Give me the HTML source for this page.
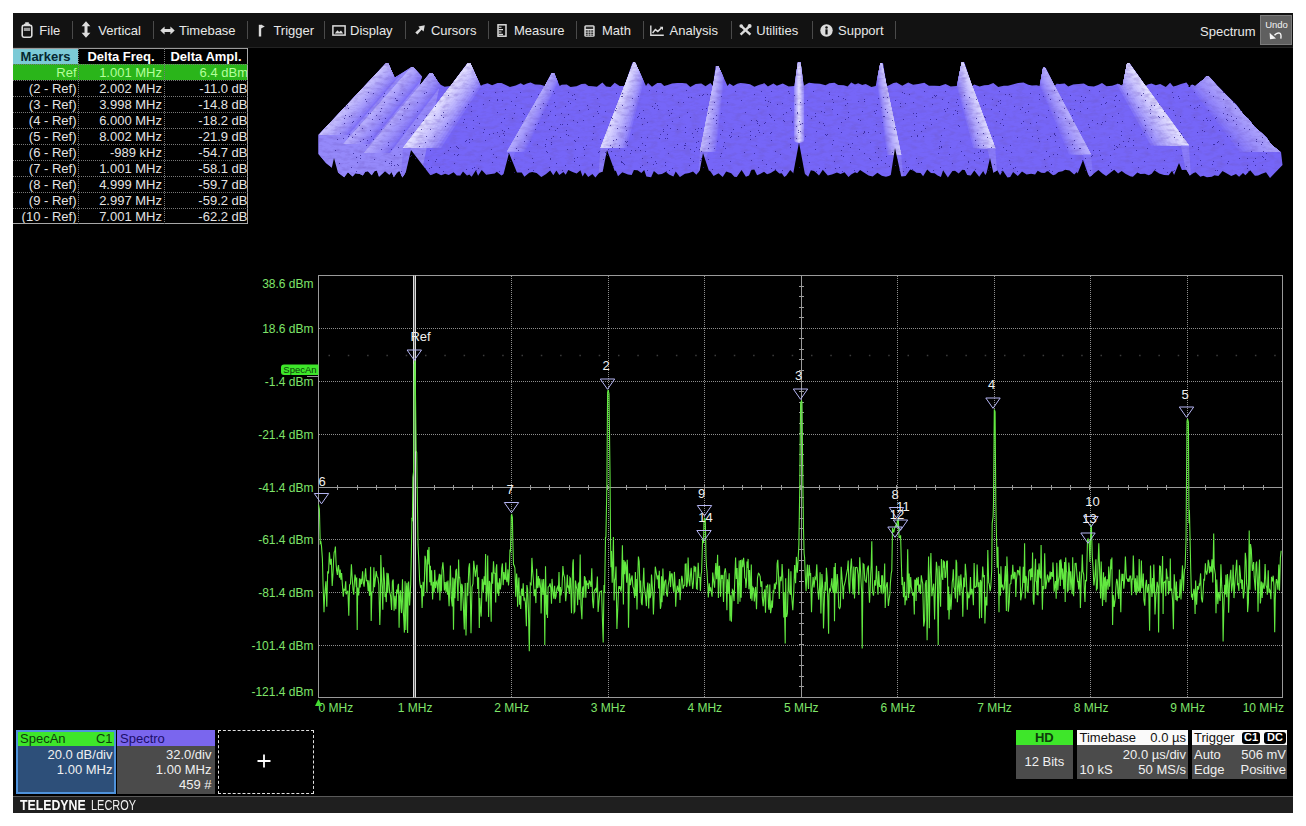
<!DOCTYPE html>
<html><head><meta charset="utf-8"><style>
html,body{margin:0;padding:0;background:#fff;width:1306px;height:826px;overflow:hidden;font-family:"Liberation Sans", sans-serif}
#frame{position:absolute;left:13px;top:13px;width:1280px;height:800px;background:#000;overflow:hidden}
#menu{position:absolute;left:0;top:0;width:1280px;height:35px;background:#121212;box-shadow:inset 0 -1px 0 #232323}
.mt{position:absolute;top:9.5px;font-size:13px;line-height:16px;color:#e8e8e8;white-space:nowrap}
.th{position:absolute;font-size:13px;font-weight:bold;line-height:17px;height:16px;text-align:center;white-space:nowrap}
.bt{position:absolute;font-size:13px;line-height:14px;white-space:nowrap}
.td{position:absolute;font-size:13px;line-height:17px;height:16px;text-align:right;color:#e4e4e4;white-space:nowrap;padding-right:1.5px}
</style></head><body>
<div id="frame">
<div id="menu">
<div style="position:absolute;left:8px;top:8.5px;line-height:0"><svg width="12" height="16" viewBox="0 0 12 16"><path d="M4.2 1h3.6M3 2.4h6" stroke="#dcdcdc" stroke-width="1.3"/><rect x="1.2" y="3.4" width="9.6" height="11.8" rx="1.6" fill="none" stroke="#dcdcdc" stroke-width="1.6"/><rect x="2.8" y="5.8" width="6.4" height="3.2" fill="#9a9a9a"/></svg></div>
<div class="mt" style="left:26.299999999999997px">File</div>
<div style="position:absolute;left:67.5px;top:8px;line-height:0"><svg width="10" height="17" viewBox="0 0 10 17"><path d="M5 0.3L9.4 5.3H6.5V11.7H9.4L5 16.7L0.6 11.7H3.5V5.3H0.6Z" fill="#dcdcdc"/></svg></div>
<div class="mt" style="left:85.3px">Vertical</div>
<div style="position:absolute;left:146.5px;top:12.5px;line-height:0"><svg width="15" height="9" viewBox="0 0 15 9"><path d="M0.3 4.5L4.6 0.5V3.1H10.4V0.5L14.7 4.5L10.4 8.5V5.9H4.6V8.5Z" fill="#dcdcdc"/></svg></div>
<div class="mt" style="left:166px">Timebase</div>
<div style="position:absolute;left:245px;top:10.5px;line-height:0"><svg width="7" height="13" viewBox="0 0 7 13"><path d="M2 0.8V12.5" stroke="#dcdcdc" stroke-width="2.4"/><path d="M3 0.6L6.8 2.4L3 4.6Z" fill="#dcdcdc"/></svg></div>
<div class="mt" style="left:260.4px">Trigger</div>
<div style="position:absolute;left:318.5px;top:12px;line-height:0"><svg width="14" height="11" viewBox="0 0 14 11"><rect x="0.9" y="0.9" width="12.2" height="9.2" fill="none" stroke="#dcdcdc" stroke-width="1.5"/><path d="M2.8 8.4L5.4 5.2L7.2 7L9 5.6L11.2 8.4Z" fill="#dcdcdc"/></svg></div>
<div class="mt" style="left:337px">Display</div>
<div style="position:absolute;left:401.5px;top:12px;line-height:0"><svg width="10" height="10" viewBox="0 0 10 10"><path d="M9.8 0.2L8.6 6.4L6.6 4.8L2.4 9.6L0.3 7.6L4.9 3.3L3.4 1.4Z" fill="#dcdcdc"/></svg></div>
<div class="mt" style="left:417.9px">Cursors</div>
<div style="position:absolute;left:484px;top:10.5px;line-height:0"><svg width="10" height="13" viewBox="0 0 10 13"><rect x="1" y="0.8" width="8" height="11.4" fill="none" stroke="#dcdcdc" stroke-width="1.5"/><path d="M1.5 3.2H4.5M1.5 5.6H6M1.5 8H4.5M1.5 10.4H6" stroke="#dcdcdc" stroke-width="1.1"/></svg></div>
<div class="mt" style="left:501px">Measure</div>
<div style="position:absolute;left:571px;top:11.5px;line-height:0"><svg width="11" height="12" viewBox="0 0 11 12"><rect x="0.3" y="0.3" width="10.4" height="11.4" rx="1.5" fill="#dcdcdc"/><rect x="1.8" y="1.6" width="7.4" height="2.4" fill="#333"/><path d="M1.8 5.2h2v1.5h-2zM4.5 5.2h2v1.5h-2zM7.2 5.2h2v1.5h-2zM1.8 7.5h2v1.5h-2zM4.5 7.5h2v1.5h-2zM7.2 7.5h2v1.5h-2zM1.8 9.6h2v1.2h-2zM4.5 9.6h2v1.2h-2zM7.2 9.6h2v1.2h-2z" fill="#333"/></svg></div>
<div class="mt" style="left:589px">Math</div>
<div style="position:absolute;left:637px;top:12px;line-height:0"><svg width="14" height="11" viewBox="0 0 14 11"><path d="M0.8 0.5V10.2H13.8" fill="none" stroke="#dcdcdc" stroke-width="1.4"/><path d="M2.6 8L5.4 4.6L7.8 6.4L11.4 3" fill="none" stroke="#dcdcdc" stroke-width="1.5"/><path d="M9.6 1.8H13V5.2Z" fill="#dcdcdc"/></svg></div>
<div class="mt" style="left:656.5px">Analysis</div>
<div style="position:absolute;left:726px;top:11px;line-height:0"><svg width="13" height="12" viewBox="0 0 13 12"><path d="M1.8 1.6L11.4 10.6" stroke="#dcdcdc" stroke-width="2.4"/><path d="M11.2 1.6L1.6 10.6" stroke="#dcdcdc" stroke-width="2.4"/><circle cx="10.6" cy="2" r="2" fill="#dcdcdc"/><circle cx="2.2" cy="2" r="1.8" fill="#dcdcdc"/></svg></div>
<div class="mt" style="left:743.3px">Utilities</div>
<div style="position:absolute;left:806.5px;top:11px;line-height:0"><svg width="13" height="13" viewBox="0 0 13 13"><circle cx="6.5" cy="6.5" r="6.2" fill="#dcdcdc"/><rect x="5.4" y="5.3" width="2.2" height="5.2" fill="#111"/><circle cx="6.5" cy="3.4" r="1.25" fill="#111"/></svg></div>
<div class="mt" style="left:825px">Support</div>
<div style="position:absolute;left:59.0px;top:8px;width:1px;height:18px;background:#4a4a4a"></div>
<div style="position:absolute;left:140.1px;top:8px;width:1px;height:18px;background:#4a4a4a"></div>
<div style="position:absolute;left:233.5px;top:8px;width:1px;height:18px;background:#4a4a4a"></div>
<div style="position:absolute;left:310.8px;top:8px;width:1px;height:18px;background:#4a4a4a"></div>
<div style="position:absolute;left:391.9px;top:8px;width:1px;height:18px;background:#4a4a4a"></div>
<div style="position:absolute;left:474.8px;top:8px;width:1px;height:18px;background:#4a4a4a"></div>
<div style="position:absolute;left:562.8px;top:8px;width:1px;height:18px;background:#4a4a4a"></div>
<div style="position:absolute;left:629.7px;top:8px;width:1px;height:18px;background:#4a4a4a"></div>
<div style="position:absolute;left:718.2px;top:8px;width:1px;height:18px;background:#4a4a4a"></div>
<div style="position:absolute;left:798.8px;top:8px;width:1px;height:18px;background:#4a4a4a"></div>
<div style="position:absolute;left:881.9px;top:8px;width:1px;height:18px;background:#4a4a4a"></div>
<div class="mt" style="left:1187px;top:11px">Spectrum</div>
<div style="position:absolute;left:1247px;top:2px;width:32px;height:30px;background:#5f5f5f;border:1px solid #7c7c7c;box-sizing:border-box"></div>
<div style="position:absolute;left:1252px;top:7px;width:23px;text-align:center;font-size:9.5px;line-height:10px;color:#f4f4f4">Undo</div>
<svg style="position:absolute;left:1256px;top:18px" width="14" height="9" viewBox="0 0 14 9"><path d="M5.5 4.2Q8 1.2 10.6 2.2Q12.6 3.2 11.8 7.6" fill="none" stroke="#f4f4f4" stroke-width="1.4"/><path d="M0.6 1.8L1 8.2L7 7.6Z" fill="#f4f4f4"/></svg>
</div>
<div style="position:absolute;left:2.5px;top:716.5px;width:100.0px;height:64.5px;box-sizing:border-box;background:#2d4f79;border:2px solid #4f93dc"></div>
<div style="position:absolute;left:4.5px;top:718.5px;width:96.0px;height:14.5px;box-sizing:border-box;background:#3ee62a"></div>
<div class="bt" style="left:7px;top:718.5px;color:#0d3d0a;">SpecAn</div>
<div class="bt" style="right:1180.5px;top:718.5px;color:#0d3d0a;">C1</div>
<div class="bt" style="right:1180.5px;top:734.5px;color:#f0f0f0;">20.0 dB/div</div>
<div class="bt" style="right:1180.5px;top:750px;color:#f0f0f0;">1.00 MHz</div>
<div style="position:absolute;left:104px;top:717px;width:97.5px;height:64px;box-sizing:border-box;background:#4b4b4b"></div>
<div style="position:absolute;left:104px;top:717px;width:97.5px;height:16px;box-sizing:border-box;background:#7a66ee"></div>
<div class="bt" style="left:107px;top:718.5px;color:#1a0d6a;">Spectro</div>
<div class="bt" style="right:1081.5px;top:734.5px;color:#f0f0f0;">32.0/div</div>
<div class="bt" style="right:1081.5px;top:750px;color:#f0f0f0;">1.00 MHz</div>
<div class="bt" style="right:1081.5px;top:765px;color:#f0f0f0;">459 #</div>
<div style="position:absolute;left:204.5px;top:717px;width:96.5px;height:64px;box-sizing:border-box;border:1px dashed #e0e0e0"></div>
<div style="position:absolute;left:251px;top:748px;width:1px;height:1px"></div>
<svg style="position:absolute;left:244px;top:741px" width="14" height="14"><path d="M7 0.5V13.5M0.5 7H13.5" stroke="#fff" stroke-width="1.8"/></svg>
<div style="position:absolute;left:1003px;top:717px;width:56.5px;height:48.5px;box-sizing:border-box;background:#4b4b4b"></div>
<div style="position:absolute;left:1003px;top:717px;width:56.5px;height:15px;box-sizing:border-box;background:#3ee62a"></div>
<div class="bt" style="left:981.3px;width:100px;text-align:center;top:717.5px;color:#0d3d0a;font-weight:bold">HD</div>
<div class="bt" style="left:981.3px;width:100px;text-align:center;top:741.5px;color:#f0f0f0;">12 Bits</div>
<div style="position:absolute;left:1063.5px;top:717px;width:111.0px;height:48.5px;box-sizing:border-box;background:#4b4b4b"></div>
<div style="position:absolute;left:1063.5px;top:717px;width:111.0px;height:15px;box-sizing:border-box;background:#fafafa"></div>
<div class="bt" style="left:1066.5px;top:717.5px;color:#111;">Timebase</div>
<div class="bt" style="right:107px;top:717.5px;color:#111;">0.0 µs</div>
<div class="bt" style="right:107px;top:734.5px;color:#f0f0f0;">20.0 µs/div</div>
<div class="bt" style="left:1066.5px;top:750px;color:#f0f0f0;">10 kS</div>
<div class="bt" style="right:107px;top:750px;color:#f0f0f0;">50 MS/s</div>
<div style="position:absolute;left:1178.5px;top:717px;width:95.5px;height:48.5px;box-sizing:border-box;background:#4b4b4b"></div>
<div style="position:absolute;left:1178.5px;top:717px;width:95.5px;height:15px;box-sizing:border-box;background:#fafafa"></div>
<div class="bt" style="left:1181px;top:717.5px;color:#111;">Trigger</div>
<div style="position:absolute;left:1229px;top:718.5px;width:18px;height:12.5px;box-sizing:border-box;background:#000;border-radius:3px"></div>
<div style="position:absolute;left:1251px;top:718.5px;width:22px;height:12.5px;box-sizing:border-box;background:#000;border-radius:3px"></div>
<div class="bt" style="left:1229px;top:718px;width:18px;text-align:center;font-size:11px;line-height:13px;font-weight:bold;color:#fff">C1</div>
<div class="bt" style="left:1251px;top:718px;width:22px;text-align:center;font-size:11px;line-height:13px;font-weight:bold;color:#fff">DC</div>
<div class="bt" style="left:1181px;top:734.5px;color:#f0f0f0;">Auto</div>
<div class="bt" style="right:7px;top:734.5px;color:#f0f0f0;">506 mV</div>
<div class="bt" style="left:1181px;top:750px;color:#f0f0f0;">Edge</div>
<div class="bt" style="right:7px;top:750px;color:#f0f0f0;">Positive</div>
<div style="position:absolute;left:0px;top:783px;width:1280px;height:17px;box-sizing:border-box;background:#1f1f1f;border-top:1px solid #5a5a5a"></div>
<div style="position:absolute;left:7px;top:784px;font-size:15px;line-height:16px;font-weight:bold;color:#fafafa;transform:scaleX(0.82);transform-origin:0 0;white-space:nowrap">TELEDYNE</div>
<div style="position:absolute;left:77.5px;top:784px;font-size:15px;line-height:16px;color:#f0f0f0;transform:scaleX(0.73);transform-origin:0 0;white-space:nowrap">LECROY</div>
<div id="table" style="position:absolute;left:0;top:0">
<div style="position:absolute;left:0;top:36px;width:65px;height:15px;background:#7ccad6"></div>
<div style="position:absolute;left:0;top:35px;width:235px;height:1px;background:#9a9a9a"></div>
<div class="th" style="left:0;top:35px;width:65px;color:#062830">Markers</div>
<div class="th" style="left:65px;top:35px;width:86px;color:#fff">Delta Freq.</div>
<div class="th" style="left:151px;top:35px;width:84px;color:#fff">Delta Ampl.</div>
<div style="position:absolute;left:0;top:51px;width:235px;height:16px;background:#2ab51a"></div>
<div class="td" style="left:0;top:51px;width:63.5px;color:#b4ff9c">Ref</div>
<div class="td" style="left:65px;top:51px;width:84px;color:#b4ff9c">1.001 MHz</div>
<div class="td" style="left:151px;top:51px;width:84px;color:#b4ff9c;padding-right:0">6.4 dBm</div>
<div class="td" style="left:0;top:67px;width:63.5px">(2 - Ref)</div>
<div class="td" style="left:65px;top:67px;width:84px">2.002 MHz</div>
<div class="td" style="left:151px;top:67px;width:83.5px">-11.0 dB</div>
<div class="td" style="left:0;top:83px;width:63.5px">(3 - Ref)</div>
<div class="td" style="left:65px;top:83px;width:84px">3.998 MHz</div>
<div class="td" style="left:151px;top:83px;width:83.5px">-14.8 dB</div>
<div class="td" style="left:0;top:99px;width:63.5px">(4 - Ref)</div>
<div class="td" style="left:65px;top:99px;width:84px">6.000 MHz</div>
<div class="td" style="left:151px;top:99px;width:83.5px">-18.2 dB</div>
<div class="td" style="left:0;top:115px;width:63.5px">(5 - Ref)</div>
<div class="td" style="left:65px;top:115px;width:84px">8.002 MHz</div>
<div class="td" style="left:151px;top:115px;width:83.5px">-21.9 dB</div>
<div class="td" style="left:0;top:131px;width:63.5px">(6 - Ref)</div>
<div class="td" style="left:65px;top:131px;width:84px">-989 kHz</div>
<div class="td" style="left:151px;top:131px;width:83.5px">-54.7 dB</div>
<div class="td" style="left:0;top:147px;width:63.5px">(7 - Ref)</div>
<div class="td" style="left:65px;top:147px;width:84px">1.001 MHz</div>
<div class="td" style="left:151px;top:147px;width:83.5px">-58.1 dB</div>
<div class="td" style="left:0;top:163px;width:63.5px">(8 - Ref)</div>
<div class="td" style="left:65px;top:163px;width:84px">4.999 MHz</div>
<div class="td" style="left:151px;top:163px;width:83.5px">-59.7 dB</div>
<div class="td" style="left:0;top:179px;width:63.5px">(9 - Ref)</div>
<div class="td" style="left:65px;top:179px;width:84px">2.997 MHz</div>
<div class="td" style="left:151px;top:179px;width:83.5px">-59.2 dB</div>
<div class="td" style="left:0;top:195px;width:63.5px">(10 - Ref)</div>
<div class="td" style="left:65px;top:195px;width:84px">7.001 MHz</div>
<div class="td" style="left:151px;top:195px;width:83.5px">-62.2 dB</div>
<div style="position:absolute;left:0;top:210px;width:235px;height:1px;background:#a8a8a8"></div>
<div style="position:absolute;left:234px;top:35px;width:1px;height:176px;background:#a8a8a8"></div>
<div style="position:absolute;left:0;top:50.5px;width:235px;height:0;border-top:1px dotted #777"></div>
<div style="position:absolute;left:0;top:66.5px;width:235px;height:0;border-top:1px dotted #777"></div>
<div style="position:absolute;left:0;top:82.5px;width:235px;height:0;border-top:1px dotted #777"></div>
<div style="position:absolute;left:0;top:98.5px;width:235px;height:0;border-top:1px dotted #777"></div>
<div style="position:absolute;left:0;top:114.5px;width:235px;height:0;border-top:1px dotted #777"></div>
<div style="position:absolute;left:0;top:130.5px;width:235px;height:0;border-top:1px dotted #777"></div>
<div style="position:absolute;left:0;top:146.5px;width:235px;height:0;border-top:1px dotted #777"></div>
<div style="position:absolute;left:0;top:162.5px;width:235px;height:0;border-top:1px dotted #777"></div>
<div style="position:absolute;left:0;top:178.5px;width:235px;height:0;border-top:1px dotted #777"></div>
<div style="position:absolute;left:0;top:194.5px;width:235px;height:0;border-top:1px dotted #777"></div>
<div style="position:absolute;left:65px;top:35px;width:0;height:176px;border-left:1px dotted #777"></div>
<div style="position:absolute;left:151px;top:35px;width:0;height:176px;border-left:1px dotted #777"></div>
</div>
</div>
<div id="spectro" style="position:absolute;left:0;top:0;width:1306px;height:826px">
<svg width="1306" height="826" style="position:absolute;left:0;top:0">
<defs><clipPath id="surf"><path d="M318.5 154.0 L318.5 135.0 L385.6 63.6 L388.0 62.9 L394.7 77.8 L410.7 67.4 L413.3 67.4 L421.8 76.4 L419.4 86.0 L429.7 73.0 L432.3 73.0 L438.0 82.0 L440.0 84.5 L444.7 86.7 L450.4 86.0 L467.5 63.0 L470.1 63.0 L480.8 86.0 L482.8 84.8 L487.6 83.3 L492.1 85.3 L497.5 82.9 L501.4 82.9 L506.8 85.6 L509.9 86.9 L515.8 85.4 L520.7 83.2 L523.7 84.9 L526.9 83.4 L530.6 82.6 L535.0 84.5 L540.6 84.8 L544.7 86.0 L551.4 73.0 L554.0 73.0 L559.7 86.0 L561.7 84.7 L566.7 84.6 L570.5 87.0 L576.5 86.3 L581.6 83.9 L585.3 83.8 L588.5 85.9 L592.7 86.3 L596.9 86.8 L602.4 82.5 L606.1 86.6 L610.5 86.9 L614.7 82.8 L619.6 86.0 L624.4 86.0 L632.5 62.6 L635.1 62.6 L646.0 86.0 L648.0 82.9 L652.0 86.8 L657.3 83.0 L661.0 83.0 L664.2 86.1 L667.7 85.0 L672.1 83.4 L677.3 83.1 L682.2 83.0 L686.5 83.5 L690.3 86.9 L695.7 83.9 L701.3 83.4 L705.5 86.3 L710.4 83.0 L712.9 86.0 L715.7 66.0 L718.3 66.0 L727.5 86.0 L729.5 83.5 L733.3 86.0 L737.3 83.8 L740.5 82.9 L745.2 83.6 L750.0 84.2 L754.4 86.8 L758.8 85.1 L764.4 83.3 L767.9 86.6 L773.4 83.6 L776.9 85.8 L782.8 83.4 L788.6 86.5 L794.4 86.0 L797.9 62.0 L800.5 62.0 L803.7 86.0 L805.7 84.4 L809.0 82.7 L814.9 83.6 L820.0 83.7 L825.5 85.2 L829.4 83.3 L834.5 82.8 L838.2 85.0 L843.8 85.3 L847.6 86.6 L851.2 82.6 L855.0 84.5 L858.2 83.3 L862.3 85.1 L865.7 84.1 L871.4 86.9 L875.7 86.0 L880.4 63.0 L883.0 63.0 L886.7 86.0 L888.7 85.6 L893.5 83.1 L896.6 82.6 L902.3 85.7 L908.2 82.6 L913.1 84.7 L918.3 83.9 L924.3 82.8 L928.9 85.8 L934.6 85.8 L939.8 86.1 L945.5 84.1 L950.6 86.6 L956.8 86.0 L961.7 62.2 L964.3 62.2 L972.2 86.0 L974.2 84.4 L979.6 86.4 L984.3 85.3 L988.4 85.1 L993.3 82.9 L998.2 87.0 L1003.8 85.8 L1008.0 85.8 L1012.7 84.5 L1018.2 82.9 L1023.5 82.6 L1028.3 84.7 L1032.0 85.6 L1036.5 85.3 L1039.6 86.0 L1043.1 67.7 L1045.7 67.7 L1054.7 86.0 L1056.7 83.7 L1059.7 83.9 L1064.7 83.4 L1068.2 86.6 L1073.2 84.5 L1078.9 84.0 L1083.9 83.4 L1088.2 86.1 L1093.9 86.5 L1098.1 85.1 L1102.0 83.1 L1106.5 86.3 L1112.1 85.7 L1117.9 83.7 L1122.5 86.0 L1127.1 63.2 L1129.7 63.2 L1145.7 86.0 L1147.7 84.5 L1151.5 83.5 L1155.8 85.3 L1160.2 83.9 L1165.8 86.9 L1170.1 82.8 L1173.2 86.4 L1176.3 85.7 L1181.0 83.9 L1186.4 82.6 L1189.0 86.0 L1188.2 87.0 L1190.8 87.0 L1190.0 86.0 L1192.0 84.5 L1195.1 86.2 L1198.8 83.1 L1203.0 80.0 L1206.5 76.0 L1208.7 76.0 L1213.0 80.8 L1217.0 85.5 L1222.0 90.2 L1226.5 95.0 L1231.4 99.8 L1236.3 104.5 L1239.9 109.2 L1242.9 114.0 L1248.2 118.8 L1251.8 123.5 L1255.8 128.2 L1261.6 133.0 L1266.8 137.8 L1269.6 142.5 L1274.4 147.2 L1281.0 152.0 L1282.5 165.0 L1270.0 178.0 L1266.0 172.3 L1261.9 173.7 L1258.1 175.5 L1254.9 175.8 L1250.2 170.2 L1245.4 175.3 L1243.0 173.1 L1239.1 176.8 L1236.0 174.1 L1231.3 175.9 L1226.5 173.2 L1222.5 171.1 L1218.4 176.0 L1214.5 175.2 L1211.8 176.7 L1206.9 177.3 L1203.3 175.8 L1200.3 176.8 L1195.7 172.3 L1193.5 173.0 L1189.8 175.6 L1186.4 169.7 L1181.9 170.0 L1177.5 170.9 L1174.5 175.8 L1172.1 170.7 L1168.6 175.3 L1164.1 175.0 L1159.2 173.4 L1154.4 170.2 L1151.7 173.7 L1148.8 175.3 L1144.9 173.7 L1140.4 174.0 L1137.4 172.5 L1132.9 176.7 L1130.3 176.3 L1125.4 173.7 L1121.7 171.1 L1118.1 173.5 L1114.2 169.7 L1109.3 173.6 L1106.1 175.9 L1102.4 173.4 L1098.4 170.0 L1094.8 172.8 L1089.9 176.9 L1087.1 173.3 L1084.7 173.0 L1080.2 176.7 L1076.8 172.0 L1074.2 174.4 L1069.5 170.5 L1065.1 169.7 L1062.5 171.3 L1058.5 172.1 L1055.4 174.5 L1053.1 175.3 L1050.7 173.6 L1048.0 171.1 L1044.4 173.0 L1041.3 172.8 L1037.7 170.8 L1035.1 174.6 L1031.1 173.7 L1026.6 174.4 L1022.0 171.4 L1017.8 176.0 L1013.1 172.0 L1010.2 176.9 L1007.5 177.5 L1002.8 170.6 L1000.1 175.3 L997.3 170.3 L992.8 172.9 L988.5 170.5 L985.3 175.0 L983.2 171.1 L979.2 176.8 L974.3 170.4 L970.7 175.6 L967.2 175.0 L964.7 170.1 L962.3 169.8 L958.7 173.6 L955.0 170.7 L952.4 171.1 L947.9 177.4 L943.1 170.3 L940.9 177.1 L937.6 175.6 L934.6 173.2 L931.0 172.9 L927.2 169.6 L923.1 176.3 L920.6 173.1 L916.4 172.7 L913.8 170.8 L910.2 169.6 L905.6 175.9 L901.4 176.4 L897.6 172.7 L893.8 173.5 L888.8 175.9 L886.0 176.8 L881.8 175.7 L877.4 172.7 L872.7 176.5 L868.6 175.6 L864.3 172.7 L860.1 170.1 L857.1 173.3 L855.1 172.3 L851.1 174.5 L848.5 177.1 L844.5 172.2 L840.5 174.1 L836.9 172.6 L831.9 174.6 L827.8 175.6 L822.8 169.7 L819.0 175.4 L816.2 172.7 L814.1 171.1 L810.9 170.3 L808.2 176.7 L804.5 173.6 L799.6 174.0 L794.6 174.6 L790.2 170.1 L786.4 175.6 L784.3 176.9 L781.8 173.3 L779.3 173.5 L775.5 170.0 L770.6 172.9 L767.1 174.3 L764.0 171.8 L760.0 174.0 L757.1 175.2 L754.3 169.6 L751.5 169.8 L749.0 175.5 L745.9 176.7 L741.6 169.9 L736.7 177.1 L734.4 176.7 L731.2 173.3 L726.2 171.4 L722.7 177.0 L718.5 173.2 L713.6 176.0 L709.8 170.4 L705.9 173.1 L703.3 169.9 L699.7 170.5 L696.4 174.8 L693.0 171.6 L689.2 172.9 L684.9 173.7 L679.9 177.1 L675.7 171.4 L673.4 176.6 L669.0 174.5 L665.9 171.7 L661.9 174.0 L658.1 174.6 L653.9 171.0 L651.1 177.3 L646.4 176.5 L644.2 170.0 L641.4 172.9 L637.6 170.3 L633.9 170.1 L631.7 174.9 L628.0 174.5 L624.9 173.3 L622.3 172.2 L618.0 176.2 L615.8 170.5 L611.4 174.5 L607.1 171.2 L603.8 171.6 L599.4 172.5 L595.4 177.4 L592.4 173.9 L588.2 176.9 L584.9 172.5 L582.6 176.5 L580.4 170.2 L576.7 173.4 L572.6 171.9 L568.3 170.1 L565.7 174.8 L563.4 171.9 L559.3 175.1 L556.4 170.6 L553.3 175.3 L550.2 170.4 L546.1 174.1 L541.3 177.0 L536.6 173.0 L532.2 171.9 L529.2 172.7 L524.4 176.7 L521.7 172.4 L518.6 172.4 L515.4 172.6 L512.8 174.0 L508.4 173.8 L503.9 174.0 L501.4 175.6 L496.8 171.8 L494.7 173.6 L491.1 174.0 L486.2 174.7 L481.7 170.0 L478.1 175.8 L475.9 170.2 L471.6 176.7 L469.4 174.6 L467.0 175.5 L463.0 171.5 L460.3 175.6 L456.8 175.6 L453.6 172.2 L448.7 174.9 L445.2 173.8 L441.1 175.2 L436.3 172.8 L431.8 174.8 L427.3 175.9 L422.8 176.6 L417.9 174.6 L414.3 175.2 L409.9 172.9 L406.7 170.7 L402.4 177.4 L399.3 170.8 L396.7 172.9 L393.8 177.3 L391.6 172.0 L389.3 174.7 L385.0 170.9 L382.8 173.2 L379.0 176.8 L376.9 170.4 L374.4 171.2 L371.7 175.2 L367.9 171.3 L365.3 171.7 L362.8 175.6 L359.9 173.9 L355.4 173.3 L352.6 176.6 L347.9 172.2 L344.2 177.2 L336.0 171.0 L326.0 163.0Z"/></clipPath><filter id="mott" x="0" y="0" width="100%" height="100%"><feTurbulence type="fractalNoise" baseFrequency="0.12 0.3" numOctaves="3" seed="4"/><feColorMatrix type="matrix" values="0 0 0 0 0.16  0 0 0 0 0.10  0 0 0 0 0.55  0 0 0 -2.2 1.25"/></filter></defs>
<path d="M318.5 154.0 L318.5 135.0 L385.6 63.6 L388.0 62.9 L394.7 77.8 L410.7 67.4 L413.3 67.4 L421.8 76.4 L419.4 86.0 L429.7 73.0 L432.3 73.0 L438.0 82.0 L440.0 84.5 L444.7 86.7 L450.4 86.0 L467.5 63.0 L470.1 63.0 L480.8 86.0 L482.8 84.8 L487.6 83.3 L492.1 85.3 L497.5 82.9 L501.4 82.9 L506.8 85.6 L509.9 86.9 L515.8 85.4 L520.7 83.2 L523.7 84.9 L526.9 83.4 L530.6 82.6 L535.0 84.5 L540.6 84.8 L544.7 86.0 L551.4 73.0 L554.0 73.0 L559.7 86.0 L561.7 84.7 L566.7 84.6 L570.5 87.0 L576.5 86.3 L581.6 83.9 L585.3 83.8 L588.5 85.9 L592.7 86.3 L596.9 86.8 L602.4 82.5 L606.1 86.6 L610.5 86.9 L614.7 82.8 L619.6 86.0 L624.4 86.0 L632.5 62.6 L635.1 62.6 L646.0 86.0 L648.0 82.9 L652.0 86.8 L657.3 83.0 L661.0 83.0 L664.2 86.1 L667.7 85.0 L672.1 83.4 L677.3 83.1 L682.2 83.0 L686.5 83.5 L690.3 86.9 L695.7 83.9 L701.3 83.4 L705.5 86.3 L710.4 83.0 L712.9 86.0 L715.7 66.0 L718.3 66.0 L727.5 86.0 L729.5 83.5 L733.3 86.0 L737.3 83.8 L740.5 82.9 L745.2 83.6 L750.0 84.2 L754.4 86.8 L758.8 85.1 L764.4 83.3 L767.9 86.6 L773.4 83.6 L776.9 85.8 L782.8 83.4 L788.6 86.5 L794.4 86.0 L797.9 62.0 L800.5 62.0 L803.7 86.0 L805.7 84.4 L809.0 82.7 L814.9 83.6 L820.0 83.7 L825.5 85.2 L829.4 83.3 L834.5 82.8 L838.2 85.0 L843.8 85.3 L847.6 86.6 L851.2 82.6 L855.0 84.5 L858.2 83.3 L862.3 85.1 L865.7 84.1 L871.4 86.9 L875.7 86.0 L880.4 63.0 L883.0 63.0 L886.7 86.0 L888.7 85.6 L893.5 83.1 L896.6 82.6 L902.3 85.7 L908.2 82.6 L913.1 84.7 L918.3 83.9 L924.3 82.8 L928.9 85.8 L934.6 85.8 L939.8 86.1 L945.5 84.1 L950.6 86.6 L956.8 86.0 L961.7 62.2 L964.3 62.2 L972.2 86.0 L974.2 84.4 L979.6 86.4 L984.3 85.3 L988.4 85.1 L993.3 82.9 L998.2 87.0 L1003.8 85.8 L1008.0 85.8 L1012.7 84.5 L1018.2 82.9 L1023.5 82.6 L1028.3 84.7 L1032.0 85.6 L1036.5 85.3 L1039.6 86.0 L1043.1 67.7 L1045.7 67.7 L1054.7 86.0 L1056.7 83.7 L1059.7 83.9 L1064.7 83.4 L1068.2 86.6 L1073.2 84.5 L1078.9 84.0 L1083.9 83.4 L1088.2 86.1 L1093.9 86.5 L1098.1 85.1 L1102.0 83.1 L1106.5 86.3 L1112.1 85.7 L1117.9 83.7 L1122.5 86.0 L1127.1 63.2 L1129.7 63.2 L1145.7 86.0 L1147.7 84.5 L1151.5 83.5 L1155.8 85.3 L1160.2 83.9 L1165.8 86.9 L1170.1 82.8 L1173.2 86.4 L1176.3 85.7 L1181.0 83.9 L1186.4 82.6 L1189.0 86.0 L1188.2 87.0 L1190.8 87.0 L1190.0 86.0 L1192.0 84.5 L1195.1 86.2 L1198.8 83.1 L1203.0 80.0 L1206.5 76.0 L1208.7 76.0 L1213.0 80.8 L1217.0 85.5 L1222.0 90.2 L1226.5 95.0 L1231.4 99.8 L1236.3 104.5 L1239.9 109.2 L1242.9 114.0 L1248.2 118.8 L1251.8 123.5 L1255.8 128.2 L1261.6 133.0 L1266.8 137.8 L1269.6 142.5 L1274.4 147.2 L1281.0 152.0 L1282.5 165.0 L1270.0 178.0 L1266.0 172.3 L1261.9 173.7 L1258.1 175.5 L1254.9 175.8 L1250.2 170.2 L1245.4 175.3 L1243.0 173.1 L1239.1 176.8 L1236.0 174.1 L1231.3 175.9 L1226.5 173.2 L1222.5 171.1 L1218.4 176.0 L1214.5 175.2 L1211.8 176.7 L1206.9 177.3 L1203.3 175.8 L1200.3 176.8 L1195.7 172.3 L1193.5 173.0 L1189.8 175.6 L1186.4 169.7 L1181.9 170.0 L1177.5 170.9 L1174.5 175.8 L1172.1 170.7 L1168.6 175.3 L1164.1 175.0 L1159.2 173.4 L1154.4 170.2 L1151.7 173.7 L1148.8 175.3 L1144.9 173.7 L1140.4 174.0 L1137.4 172.5 L1132.9 176.7 L1130.3 176.3 L1125.4 173.7 L1121.7 171.1 L1118.1 173.5 L1114.2 169.7 L1109.3 173.6 L1106.1 175.9 L1102.4 173.4 L1098.4 170.0 L1094.8 172.8 L1089.9 176.9 L1087.1 173.3 L1084.7 173.0 L1080.2 176.7 L1076.8 172.0 L1074.2 174.4 L1069.5 170.5 L1065.1 169.7 L1062.5 171.3 L1058.5 172.1 L1055.4 174.5 L1053.1 175.3 L1050.7 173.6 L1048.0 171.1 L1044.4 173.0 L1041.3 172.8 L1037.7 170.8 L1035.1 174.6 L1031.1 173.7 L1026.6 174.4 L1022.0 171.4 L1017.8 176.0 L1013.1 172.0 L1010.2 176.9 L1007.5 177.5 L1002.8 170.6 L1000.1 175.3 L997.3 170.3 L992.8 172.9 L988.5 170.5 L985.3 175.0 L983.2 171.1 L979.2 176.8 L974.3 170.4 L970.7 175.6 L967.2 175.0 L964.7 170.1 L962.3 169.8 L958.7 173.6 L955.0 170.7 L952.4 171.1 L947.9 177.4 L943.1 170.3 L940.9 177.1 L937.6 175.6 L934.6 173.2 L931.0 172.9 L927.2 169.6 L923.1 176.3 L920.6 173.1 L916.4 172.7 L913.8 170.8 L910.2 169.6 L905.6 175.9 L901.4 176.4 L897.6 172.7 L893.8 173.5 L888.8 175.9 L886.0 176.8 L881.8 175.7 L877.4 172.7 L872.7 176.5 L868.6 175.6 L864.3 172.7 L860.1 170.1 L857.1 173.3 L855.1 172.3 L851.1 174.5 L848.5 177.1 L844.5 172.2 L840.5 174.1 L836.9 172.6 L831.9 174.6 L827.8 175.6 L822.8 169.7 L819.0 175.4 L816.2 172.7 L814.1 171.1 L810.9 170.3 L808.2 176.7 L804.5 173.6 L799.6 174.0 L794.6 174.6 L790.2 170.1 L786.4 175.6 L784.3 176.9 L781.8 173.3 L779.3 173.5 L775.5 170.0 L770.6 172.9 L767.1 174.3 L764.0 171.8 L760.0 174.0 L757.1 175.2 L754.3 169.6 L751.5 169.8 L749.0 175.5 L745.9 176.7 L741.6 169.9 L736.7 177.1 L734.4 176.7 L731.2 173.3 L726.2 171.4 L722.7 177.0 L718.5 173.2 L713.6 176.0 L709.8 170.4 L705.9 173.1 L703.3 169.9 L699.7 170.5 L696.4 174.8 L693.0 171.6 L689.2 172.9 L684.9 173.7 L679.9 177.1 L675.7 171.4 L673.4 176.6 L669.0 174.5 L665.9 171.7 L661.9 174.0 L658.1 174.6 L653.9 171.0 L651.1 177.3 L646.4 176.5 L644.2 170.0 L641.4 172.9 L637.6 170.3 L633.9 170.1 L631.7 174.9 L628.0 174.5 L624.9 173.3 L622.3 172.2 L618.0 176.2 L615.8 170.5 L611.4 174.5 L607.1 171.2 L603.8 171.6 L599.4 172.5 L595.4 177.4 L592.4 173.9 L588.2 176.9 L584.9 172.5 L582.6 176.5 L580.4 170.2 L576.7 173.4 L572.6 171.9 L568.3 170.1 L565.7 174.8 L563.4 171.9 L559.3 175.1 L556.4 170.6 L553.3 175.3 L550.2 170.4 L546.1 174.1 L541.3 177.0 L536.6 173.0 L532.2 171.9 L529.2 172.7 L524.4 176.7 L521.7 172.4 L518.6 172.4 L515.4 172.6 L512.8 174.0 L508.4 173.8 L503.9 174.0 L501.4 175.6 L496.8 171.8 L494.7 173.6 L491.1 174.0 L486.2 174.7 L481.7 170.0 L478.1 175.8 L475.9 170.2 L471.6 176.7 L469.4 174.6 L467.0 175.5 L463.0 171.5 L460.3 175.6 L456.8 175.6 L453.6 172.2 L448.7 174.9 L445.2 173.8 L441.1 175.2 L436.3 172.8 L431.8 174.8 L427.3 175.9 L422.8 176.6 L417.9 174.6 L414.3 175.2 L409.9 172.9 L406.7 170.7 L402.4 177.4 L399.3 170.8 L396.7 172.9 L393.8 177.3 L391.6 172.0 L389.3 174.7 L385.0 170.9 L382.8 173.2 L379.0 176.8 L376.9 170.4 L374.4 171.2 L371.7 175.2 L367.9 171.3 L365.3 171.7 L362.8 175.6 L359.9 173.9 L355.4 173.3 L352.6 176.6 L347.9 172.2 L344.2 177.2 L336.0 171.0 L326.0 163.0Z" fill="#7666f8"/>
<g clip-path="url(#surf)">
<path d="M318 60H445L420 180H318Z" fill="#9589fa"/>
<path d="M386.8 62.4 L318.5 135.0 L348.5 135.0 L402.8 72.0Z" fill="#8172f9"/>
<path d="M386.8 62.4 L318.5 135.0 L346.0 135.0 L401.5 71.2Z" fill="#8c7ef9"/>
<path d="M386.8 62.4 L318.5 135.0 L343.5 135.0 L400.1 70.4Z" fill="#9488fa"/>
<path d="M386.8 62.4 L318.5 135.0 L341.0 135.0 L398.8 69.6Z" fill="#9c90fa"/>
<path d="M386.8 62.4 L318.5 135.0 L338.5 135.0 L397.5 68.8Z" fill="#a298fb"/>
<path d="M386.8 62.4 L318.5 135.0 L336.0 135.0 L396.1 68.0Z" fill="#a99efb"/>
<path d="M386.8 62.4 L318.5 135.0 L333.5 135.0 L394.8 67.2Z" fill="#aea5fc"/>
<path d="M386.8 62.4 L318.5 135.0 L331.0 135.0 L393.5 66.4Z" fill="#b4abfc"/>
<path d="M386.8 62.4 L318.5 135.0 L328.5 135.0 L392.1 65.6Z" fill="#b9b1fc"/>
<path d="M386.8 62.4 L318.5 135.0 L326.0 135.0 L390.8 64.8Z" fill="#beb7fd"/>
<path d="M386.8 62.4 L318.5 135.0 L323.5 135.0 L389.5 64.0Z" fill="#c3bcfd"/>
<path d="M386.8 62.4 L318.5 135.0 L321.0 135.0 L388.1 63.2Z" fill="#c8c1fd"/>
<path d="M412.0 66.4 L343.5 144.0 L369.5 144.0 L426.0 74.8Z" fill="#7f70f9"/>
<path d="M412.0 66.4 L343.5 144.0 L367.3 144.0 L424.8 74.1Z" fill="#8779f9"/>
<path d="M412.0 66.4 L343.5 144.0 L365.2 144.0 L423.7 73.4Z" fill="#8e81fa"/>
<path d="M412.0 66.4 L343.5 144.0 L363.0 144.0 L422.5 72.7Z" fill="#9488fa"/>
<path d="M412.0 66.4 L343.5 144.0 L360.8 144.0 L421.3 72.0Z" fill="#9a8efa"/>
<path d="M412.0 66.4 L343.5 144.0 L358.7 144.0 L420.2 71.3Z" fill="#9e93fb"/>
<path d="M412.0 66.4 L343.5 144.0 L356.5 144.0 L419.0 70.6Z" fill="#a398fb"/>
<path d="M412.0 66.4 L343.5 144.0 L354.3 144.0 L417.8 69.9Z" fill="#a89dfb"/>
<path d="M412.0 66.4 L343.5 144.0 L352.2 144.0 L416.7 69.2Z" fill="#aca2fb"/>
<path d="M412.0 66.4 L343.5 144.0 L350.0 144.0 L415.5 68.5Z" fill="#b0a6fc"/>
<path d="M412.0 66.4 L343.5 144.0 L347.8 144.0 L414.3 67.8Z" fill="#b4abfc"/>
<path d="M412.0 66.4 L343.5 144.0 L345.7 144.0 L413.2 67.1Z" fill="#b7affc"/>
<path d="M431.0 72.0 L364.0 153.0 L390.0 153.0 L445.0 80.4Z" fill="#7e6ff8"/>
<path d="M431.0 72.0 L364.0 153.0 L387.8 153.0 L443.8 79.7Z" fill="#8678f9"/>
<path d="M431.0 72.0 L364.0 153.0 L385.7 153.0 L442.7 79.0Z" fill="#8c7ff9"/>
<path d="M431.0 72.0 L364.0 153.0 L383.5 153.0 L441.5 78.3Z" fill="#9285fa"/>
<path d="M431.0 72.0 L364.0 153.0 L381.3 153.0 L440.3 77.6Z" fill="#978afa"/>
<path d="M431.0 72.0 L364.0 153.0 L379.2 153.0 L439.2 76.9Z" fill="#9b8ffa"/>
<path d="M431.0 72.0 L364.0 153.0 L377.0 153.0 L438.0 76.2Z" fill="#9f94fb"/>
<path d="M431.0 72.0 L364.0 153.0 L374.8 153.0 L436.8 75.5Z" fill="#a399fb"/>
<path d="M431.0 72.0 L364.0 153.0 L372.7 153.0 L435.7 74.8Z" fill="#a79dfb"/>
<path d="M431.0 72.0 L364.0 153.0 L370.5 153.0 L434.5 74.1Z" fill="#aba1fb"/>
<path d="M431.0 72.0 L364.0 153.0 L368.3 153.0 L433.3 73.4Z" fill="#aea5fc"/>
<path d="M431.0 72.0 L364.0 153.0 L366.2 153.0 L432.2 72.7Z" fill="#b2a9fc"/>
<path d="M468.8 62.0 L403.0 148.0 L441.0 148.0 L488.8 74.0Z" fill="#8476f9"/>
<path d="M468.8 62.0 L403.0 148.0 L437.8 148.0 L487.1 73.0Z" fill="#9386fa"/>
<path d="M468.8 62.0 L403.0 148.0 L434.7 148.0 L485.5 72.0Z" fill="#9e93fb"/>
<path d="M468.8 62.0 L403.0 148.0 L431.5 148.0 L483.8 71.0Z" fill="#a89efb"/>
<path d="M468.8 62.0 L403.0 148.0 L428.3 148.0 L482.1 70.0Z" fill="#b1a8fc"/>
<path d="M468.8 62.0 L403.0 148.0 L425.2 148.0 L480.5 69.0Z" fill="#b9b1fc"/>
<path d="M468.8 62.0 L403.0 148.0 L422.0 148.0 L478.8 68.0Z" fill="#c1bafd"/>
<path d="M468.8 62.0 L403.0 148.0 L418.8 148.0 L477.1 67.0Z" fill="#c9c2fd"/>
<path d="M468.8 62.0 L403.0 148.0 L415.7 148.0 L475.5 66.0Z" fill="#d0cafe"/>
<path d="M468.8 62.0 L403.0 148.0 L412.5 148.0 L473.8 65.0Z" fill="#d6d1fe"/>
<path d="M468.8 62.0 L403.0 148.0 L409.3 148.0 L472.1 64.0Z" fill="#ddd9fe"/>
<path d="M468.8 62.0 L403.0 148.0 L406.2 148.0 L470.5 63.0Z" fill="#e3e0ff"/>
<path d="M403.0 148L411.0 148L405.0 176L401.0 176Z" fill="#8a7cf9"/>
<path d="M552.7 72.0 L507.0 151.7 L525.0 151.7 L560.7 76.8Z" fill="#7e6ff8"/>
<path d="M552.7 72.0 L507.0 151.7 L523.5 151.7 L560.0 76.4Z" fill="#8678f9"/>
<path d="M552.7 72.0 L507.0 151.7 L522.0 151.7 L559.4 76.0Z" fill="#8c7ff9"/>
<path d="M552.7 72.0 L507.0 151.7 L520.5 151.7 L558.7 75.6Z" fill="#9285fa"/>
<path d="M552.7 72.0 L507.0 151.7 L519.0 151.7 L558.0 75.2Z" fill="#978afa"/>
<path d="M552.7 72.0 L507.0 151.7 L517.5 151.7 L557.4 74.8Z" fill="#9b8ffa"/>
<path d="M552.7 72.0 L507.0 151.7 L516.0 151.7 L556.7 74.4Z" fill="#9f94fb"/>
<path d="M552.7 72.0 L507.0 151.7 L514.5 151.7 L556.0 74.0Z" fill="#a399fb"/>
<path d="M552.7 72.0 L507.0 151.7 L513.0 151.7 L555.4 73.6Z" fill="#a79dfb"/>
<path d="M552.7 72.0 L507.0 151.7 L511.5 151.7 L554.7 73.2Z" fill="#aba1fb"/>
<path d="M552.7 72.0 L507.0 151.7 L510.0 151.7 L554.0 72.8Z" fill="#aea5fc"/>
<path d="M552.7 72.0 L507.0 151.7 L508.5 151.7 L553.4 72.4Z" fill="#b2a9fc"/>
<path d="M507.0 151.7L515.0 151.7L509.0 176L505.0 176Z" fill="#8172f9"/>
<path d="M633.8 61.6 L600.5 148.0 L626.5 148.0 L646.8 69.4Z" fill="#8375f9"/>
<path d="M633.8 61.6 L600.5 148.0 L624.3 148.0 L645.7 68.8Z" fill="#9285fa"/>
<path d="M633.8 61.6 L600.5 148.0 L622.2 148.0 L644.6 68.1Z" fill="#9c91fa"/>
<path d="M633.8 61.6 L600.5 148.0 L620.0 148.0 L643.5 67.5Z" fill="#a69bfb"/>
<path d="M633.8 61.6 L600.5 148.0 L617.8 148.0 L642.5 66.8Z" fill="#aea5fc"/>
<path d="M633.8 61.6 L600.5 148.0 L615.7 148.0 L641.4 66.2Z" fill="#b6aefc"/>
<path d="M633.8 61.6 L600.5 148.0 L613.5 148.0 L640.3 65.5Z" fill="#bdb6fc"/>
<path d="M633.8 61.6 L600.5 148.0 L611.3 148.0 L639.2 64.8Z" fill="#c4bdfd"/>
<path d="M633.8 61.6 L600.5 148.0 L609.2 148.0 L638.1 64.2Z" fill="#cbc5fd"/>
<path d="M633.8 61.6 L600.5 148.0 L607.0 148.0 L637.0 63.6Z" fill="#d1ccfe"/>
<path d="M633.8 61.6 L600.5 148.0 L604.8 148.0 L636.0 62.9Z" fill="#d8d3fe"/>
<path d="M633.8 61.6 L600.5 148.0 L602.7 148.0 L634.9 62.2Z" fill="#dddafe"/>
<path d="M600.5 148L608.5 148L602.5 176L598.5 176Z" fill="#897bf9"/>
<path d="M717.0 65.0 L700.0 151.7 L716.0 151.7 L725.0 69.8Z" fill="#8071f9"/>
<path d="M717.0 65.0 L700.0 151.7 L714.7 151.7 L724.3 69.4Z" fill="#8a7df9"/>
<path d="M717.0 65.0 L700.0 151.7 L713.3 151.7 L723.7 69.0Z" fill="#9286fa"/>
<path d="M717.0 65.0 L700.0 151.7 L712.0 151.7 L723.0 68.6Z" fill="#998dfa"/>
<path d="M717.0 65.0 L700.0 151.7 L710.7 151.7 L722.3 68.2Z" fill="#9f94fb"/>
<path d="M717.0 65.0 L700.0 151.7 L709.3 151.7 L721.7 67.8Z" fill="#a59bfb"/>
<path d="M717.0 65.0 L700.0 151.7 L708.0 151.7 L721.0 67.4Z" fill="#aba1fb"/>
<path d="M717.0 65.0 L700.0 151.7 L706.7 151.7 L720.3 67.0Z" fill="#b0a6fc"/>
<path d="M717.0 65.0 L700.0 151.7 L705.3 151.7 L719.7 66.6Z" fill="#b5acfc"/>
<path d="M717.0 65.0 L700.0 151.7 L704.0 151.7 L719.0 66.2Z" fill="#b9b1fc"/>
<path d="M717.0 65.0 L700.0 151.7 L702.7 151.7 L718.3 65.8Z" fill="#beb6fc"/>
<path d="M717.0 65.0 L700.0 151.7 L701.3 151.7 L717.7 65.4Z" fill="#c2bbfd"/>
<path d="M700.0 151.7L708.0 151.7L702.0 176L698.0 176Z" fill="#8476f9"/>
<path d="M881.7 62.0 L901.2 155.0 L887.2 155.0 L874.7 66.2Z" fill="#8173f9"/>
<path d="M881.7 62.0 L901.2 155.0 L888.4 155.0 L875.3 65.8Z" fill="#8d80f9"/>
<path d="M881.7 62.0 L901.2 155.0 L889.5 155.0 L875.9 65.5Z" fill="#968afa"/>
<path d="M881.7 62.0 L901.2 155.0 L890.7 155.0 L876.5 65.2Z" fill="#9e93fb"/>
<path d="M881.7 62.0 L901.2 155.0 L891.9 155.0 L877.0 64.8Z" fill="#a59bfb"/>
<path d="M881.7 62.0 L901.2 155.0 L893.0 155.0 L877.6 64.5Z" fill="#aca2fb"/>
<path d="M881.7 62.0 L901.2 155.0 L894.2 155.0 L878.2 64.1Z" fill="#b2a9fc"/>
<path d="M881.7 62.0 L901.2 155.0 L895.4 155.0 L878.8 63.8Z" fill="#b8b0fc"/>
<path d="M881.7 62.0 L901.2 155.0 L896.5 155.0 L879.4 63.4Z" fill="#beb6fc"/>
<path d="M881.7 62.0 L901.2 155.0 L897.7 155.0 L880.0 63.0Z" fill="#c3bcfd"/>
<path d="M881.7 62.0 L901.2 155.0 L898.9 155.0 L880.5 62.7Z" fill="#c8c2fd"/>
<path d="M881.7 62.0 L901.2 155.0 L900.0 155.0 L881.1 62.4Z" fill="#cdc7fd"/>
<path d="M901.2 155L893.2 155L899.2 176L903.2 176Z" fill="#8678f9"/>
<path d="M963.0 61.2 L995.3 148.3 L973.3 148.3 L952.0 67.8Z" fill="#8375f9"/>
<path d="M963.0 61.2 L995.3 148.3 L975.1 148.3 L952.9 67.2Z" fill="#9184fa"/>
<path d="M963.0 61.2 L995.3 148.3 L977.0 148.3 L953.8 66.7Z" fill="#9b8ffa"/>
<path d="M963.0 61.2 L995.3 148.3 L978.8 148.3 L954.8 66.2Z" fill="#a49afb"/>
<path d="M963.0 61.2 L995.3 148.3 L980.6 148.3 L955.7 65.6Z" fill="#aca3fb"/>
<path d="M963.0 61.2 L995.3 148.3 L982.5 148.3 L956.6 65.0Z" fill="#b4abfc"/>
<path d="M963.0 61.2 L995.3 148.3 L984.3 148.3 L957.5 64.5Z" fill="#bbb3fc"/>
<path d="M963.0 61.2 L995.3 148.3 L986.1 148.3 L958.4 64.0Z" fill="#c2bbfd"/>
<path d="M963.0 61.2 L995.3 148.3 L988.0 148.3 L959.3 63.4Z" fill="#c8c2fd"/>
<path d="M963.0 61.2 L995.3 148.3 L989.8 148.3 L960.2 62.9Z" fill="#cfc9fe"/>
<path d="M963.0 61.2 L995.3 148.3 L991.6 148.3 L961.2 62.3Z" fill="#d4cffe"/>
<path d="M963.0 61.2 L995.3 148.3 L993.5 148.3 L962.1 61.8Z" fill="#dad6fe"/>
<path d="M995.3 148.3L987.3 148.3L993.3 176L997.3 176Z" fill="#897bf9"/>
<path d="M1044.4 66.7 L1091.0 154.4 L1069.0 154.4 L1034.4 72.7Z" fill="#7f70f9"/>
<path d="M1044.4 66.7 L1091.0 154.4 L1070.8 154.4 L1035.2 72.2Z" fill="#8779f9"/>
<path d="M1044.4 66.7 L1091.0 154.4 L1072.7 154.4 L1036.1 71.7Z" fill="#8e81fa"/>
<path d="M1044.4 66.7 L1091.0 154.4 L1074.5 154.4 L1036.9 71.2Z" fill="#9488fa"/>
<path d="M1044.4 66.7 L1091.0 154.4 L1076.3 154.4 L1037.7 70.7Z" fill="#9a8efa"/>
<path d="M1044.4 66.7 L1091.0 154.4 L1078.2 154.4 L1038.6 70.2Z" fill="#9e93fb"/>
<path d="M1044.4 66.7 L1091.0 154.4 L1080.0 154.4 L1039.4 69.7Z" fill="#a398fb"/>
<path d="M1044.4 66.7 L1091.0 154.4 L1081.8 154.4 L1040.2 69.2Z" fill="#a89dfb"/>
<path d="M1044.4 66.7 L1091.0 154.4 L1083.7 154.4 L1041.1 68.7Z" fill="#aca2fb"/>
<path d="M1044.4 66.7 L1091.0 154.4 L1085.5 154.4 L1041.9 68.2Z" fill="#b0a6fc"/>
<path d="M1044.4 66.7 L1091.0 154.4 L1087.3 154.4 L1042.7 67.7Z" fill="#b4abfc"/>
<path d="M1044.4 66.7 L1091.0 154.4 L1089.2 154.4 L1043.6 67.2Z" fill="#b7affc"/>
<path d="M1091.0 154.4L1083.0 154.4L1089.0 176L1093.0 176Z" fill="#8274f9"/>
<path d="M1128.4 62.2 L1188.9 145.5 L1150.9 145.5 L1110.4 73.0Z" fill="#8476f9"/>
<path d="M1128.4 62.2 L1188.9 145.5 L1154.1 145.5 L1111.9 72.1Z" fill="#9386fa"/>
<path d="M1128.4 62.2 L1188.9 145.5 L1157.2 145.5 L1113.4 71.2Z" fill="#9e93fb"/>
<path d="M1128.4 62.2 L1188.9 145.5 L1160.4 145.5 L1114.9 70.3Z" fill="#a89efb"/>
<path d="M1128.4 62.2 L1188.9 145.5 L1163.6 145.5 L1116.4 69.4Z" fill="#b1a8fc"/>
<path d="M1128.4 62.2 L1188.9 145.5 L1166.7 145.5 L1117.9 68.5Z" fill="#b9b1fc"/>
<path d="M1128.4 62.2 L1188.9 145.5 L1169.9 145.5 L1119.4 67.6Z" fill="#c1bafd"/>
<path d="M1128.4 62.2 L1188.9 145.5 L1173.1 145.5 L1120.9 66.7Z" fill="#c9c2fd"/>
<path d="M1128.4 62.2 L1188.9 145.5 L1176.2 145.5 L1122.4 65.8Z" fill="#d0cafe"/>
<path d="M1128.4 62.2 L1188.9 145.5 L1179.4 145.5 L1123.9 64.9Z" fill="#d6d1fe"/>
<path d="M1128.4 62.2 L1188.9 145.5 L1182.6 145.5 L1125.4 64.0Z" fill="#ddd9fe"/>
<path d="M1128.4 62.2 L1188.9 145.5 L1185.7 145.5 L1126.9 63.1Z" fill="#e3e0ff"/>
<path d="M1188.9 145.5L1180.9 145.5L1186.9 176L1190.9 176Z" fill="#8a7cf9"/>
<path d="M1207.6 75.5 L1280.0 152.0 L1240.0 152.0 L1189.6 86.3Z" fill="#7d6ef8"/>
<path d="M1207.6 75.5 L1280.0 152.0 L1243.3 152.0 L1191.1 85.4Z" fill="#8476f9"/>
<path d="M1207.6 75.5 L1280.0 152.0 L1246.7 152.0 L1192.6 84.5Z" fill="#8a7df9"/>
<path d="M1207.6 75.5 L1280.0 152.0 L1250.0 152.0 L1194.1 83.6Z" fill="#8f82fa"/>
<path d="M1207.6 75.5 L1280.0 152.0 L1253.3 152.0 L1195.6 82.7Z" fill="#9487fa"/>
<path d="M1207.6 75.5 L1280.0 152.0 L1256.7 152.0 L1197.1 81.8Z" fill="#988cfa"/>
<path d="M1207.6 75.5 L1280.0 152.0 L1260.0 152.0 L1198.6 80.9Z" fill="#9c90fa"/>
<path d="M1207.6 75.5 L1280.0 152.0 L1263.3 152.0 L1200.1 80.0Z" fill="#9f94fb"/>
<path d="M1207.6 75.5 L1280.0 152.0 L1266.7 152.0 L1201.6 79.1Z" fill="#a398fb"/>
<path d="M1207.6 75.5 L1280.0 152.0 L1270.0 152.0 L1203.1 78.2Z" fill="#a69cfb"/>
<path d="M1207.6 75.5 L1280.0 152.0 L1273.3 152.0 L1204.6 77.3Z" fill="#a99ffb"/>
<path d="M1207.6 75.5 L1280.0 152.0 L1276.7 152.0 L1206.1 76.4Z" fill="#aca3fb"/>
<rect x="794.1" y="61.0" width="10.0" height="81.4" rx="3.0" fill="#988cfa"/>
<rect x="794.9" y="61.5" width="8.4" height="80.9" rx="3.0" fill="#a59afb"/>
<rect x="795.7" y="62.0" width="6.8" height="80.4" rx="3.0" fill="#b2aafc"/>
<rect x="796.5" y="62.5" width="5.2" height="79.9" rx="2.6" fill="#c0b8fd"/>
<rect x="797.3" y="63.0" width="3.6" height="79.4" rx="1.8" fill="#cdc8fd"/>
<rect x="798.1" y="63.5" width="2.0" height="78.9" rx="1.0" fill="#dbd6fe"/>
<rect x="318" y="58" width="966" height="125" filter="url(#mott)" opacity="0.4"/>
</g>
<path d="M411 150L404 180L434 180ZM509 153L502 180L520 180ZM607 150L601 180L618 180ZM703 153L698 180L712 180ZM799 142.4L792 180L806 180ZM895 148L890 180L902 180ZM990 158L985 180L995 180ZM1083 160L1075 180L1090 180ZM1179 163L1172 180L1186 180ZM334 158L329 180L340 180Z" fill="#000"/>
<path d="M538 94h1v1h-1zM1221 156h1v1h-1zM692 133h1v1h-1zM815 113h1v1h-1zM1261 144h1v1h-1zM553 91h1v1h-1zM774 120h1v1h-1zM1079 148h1v1h-1zM900 103h1v1h-1zM477 116h1v1h-1zM574 161h1v1h-1zM815 142h1v1h-1zM1264 112h1v1h-1zM833 102h1v1h-1zM1054 90h1v1h-1zM1102 159h1v1h-1zM1103 97h1v1h-1zM584 149h1v1h-1zM421 129h1v1h-1zM771 168h1v1h-1zM881 160h1v1h-1zM615 155h1v1h-1zM722 165h1v1h-1zM415 158h1v1h-1zM526 135h1v1h-1zM824 103h1v1h-1zM1112 116h1v1h-1zM622 96h1v1h-1zM617 128h1v1h-1zM1002 119h1v1h-1zM976 99h1v1h-1zM701 128h1v1h-1zM1239 158h1v1h-1zM945 91h1v1h-1zM684 148h1v1h-1zM553 136h1v1h-1zM761 91h1v1h-1zM1262 156h1v1h-1zM524 141h1v1h-1zM603 121h1v1h-1zM837 114h1v1h-1zM647 122h1v1h-1zM957 111h1v1h-1zM518 150h1v1h-1zM640 167h1v1h-1zM859 149h1v1h-1zM642 158h1v1h-1zM417 102h1v1h-1zM419 146h1v1h-1zM996 105h1v1h-1zM708 159h1v1h-1zM887 97h1v1h-1zM543 103h1v1h-1zM447 123h1v1h-1zM398 165h1v1h-1zM731 132h1v1h-1zM938 153h1v1h-1zM1102 122h1v1h-1zM642 124h1v1h-1zM344 123h1v1h-1zM988 171h1v1h-1zM1072 144h1v1h-1zM902 92h1v1h-1zM641 118h1v1h-1zM942 99h1v1h-1zM685 132h1v1h-1zM1071 158h1v1h-1zM905 103h1v1h-1zM1051 164h1v1h-1zM845 119h1v1h-1zM800 102h1v1h-1zM1001 171h1v1h-1zM815 149h1v1h-1zM1115 106h1v1h-1zM1218 141h1v1h-1zM516 97h1v1h-1zM560 137h1v1h-1zM985 117h1v1h-1zM1203 120h1v1h-1zM765 100h1v1h-1zM1245 101h1v1h-1zM1180 135h1v1h-1zM857 136h1v1h-1zM579 165h1v1h-1zM1263 157h1v1h-1zM895 100h1v1h-1zM1105 114h1v1h-1zM1173 110h1v1h-1zM869 158h1v1h-1zM504 135h1v1h-1zM402 93h1v1h-1zM499 171h1v1h-1zM1213 144h1v1h-1zM619 145h1v1h-1zM1023 121h1v1h-1zM886 156h1v1h-1zM345 106h1v1h-1zM770 102h1v1h-1zM693 137h1v1h-1zM493 133h1v1h-1zM578 137h1v1h-1zM642 143h1v1h-1zM366 145h1v1h-1zM466 169h1v1h-1zM894 129h1v1h-1zM717 141h1v1h-1zM978 152h1v1h-1zM1037 130h1v1h-1zM1265 159h1v1h-1zM1134 124h1v1h-1zM738 136h1v1h-1zM1181 133h1v1h-1zM824 125h1v1h-1zM1180 116h1v1h-1zM381 149h1v1h-1zM1176 150h1v1h-1zM892 152h1v1h-1zM616 139h1v1h-1zM396 100h1v1h-1zM750 131h1v1h-1zM703 94h1v1h-1zM983 133h1v1h-1zM555 115h1v1h-1zM702 109h1v1h-1zM394 165h1v1h-1zM1238 145h1v1h-1zM1145 125h1v1h-1zM1087 108h1v1h-1zM1032 136h1v1h-1zM1179 98h1v1h-1zM1075 100h1v1h-1zM835 168h1v1h-1zM331 110h1v1h-1zM611 117h1v1h-1zM389 163h1v1h-1zM1097 123h1v1h-1zM665 138h1v1h-1zM373 93h1v1h-1zM1175 115h1v1h-1zM799 167h1v1h-1zM1249 129h1v1h-1zM524 114h1v1h-1zM1197 164h1v1h-1zM514 159h1v1h-1zM663 129h1v1h-1zM492 162h1v1h-1zM1266 107h1v1h-1zM924 106h1v1h-1zM1157 94h1v1h-1zM430 150h1v1h-1zM624 164h1v1h-1zM1147 148h1v1h-1zM457 147h1v1h-1zM1212 127h1v1h-1zM404 108h1v1h-1zM619 148h1v1h-1zM515 105h1v1h-1zM551 144h1v1h-1zM1073 121h1v1h-1zM952 163h1v1h-1zM885 109h1v1h-1zM613 166h1v1h-1zM957 113h1v1h-1zM932 97h1v1h-1zM1254 126h1v1h-1zM827 134h1v1h-1zM373 139h1v1h-1zM597 111h1v1h-1zM1085 97h1v1h-1zM598 152h1v1h-1zM561 113h1v1h-1zM845 105h1v1h-1zM1173 171h1v1h-1zM362 128h1v1h-1zM1036 122h1v1h-1zM1204 131h1v1h-1zM499 136h1v1h-1zM936 119h1v1h-1zM949 154h1v1h-1zM816 131h1v1h-1zM1125 146h1v1h-1zM819 168h1v1h-1zM493 154h1v1h-1zM485 140h1v1h-1zM551 126h1v1h-1zM1057 154h1v1h-1zM1074 109h1v1h-1zM790 108h1v1h-1zM875 131h1v1h-1zM363 139h1v1h-1zM1002 137h1v1h-1zM1151 105h1v1h-1zM473 91h1v1h-1zM796 126h1v1h-1zM745 112h1v1h-1zM1081 96h1v1h-1zM1183 137h1v1h-1zM841 155h1v1h-1zM554 102h1v1h-1zM622 93h1v1h-1zM625 141h1v1h-1zM824 112h1v1h-1zM883 97h1v1h-1zM1101 104h1v1h-1zM570 103h1v1h-1zM979 158h1v1h-1zM1070 95h1v1h-1zM716 120h1v1h-1zM533 170h1v1h-1zM370 130h1v1h-1zM1046 171h1v1h-1zM466 127h1v1h-1zM1030 93h1v1h-1zM556 163h1v1h-1zM463 122h1v1h-1zM610 125h1v1h-1zM402 93h1v1h-1zM1266 153h1v1h-1zM1020 109h1v1h-1zM568 135h1v1h-1zM557 128h1v1h-1zM1207 120h1v1h-1zM647 170h1v1h-1zM904 93h1v1h-1zM709 143h1v1h-1zM385 118h1v1h-1zM983 161h1v1h-1zM885 163h1v1h-1zM765 122h1v1h-1zM1122 121h1v1h-1zM1064 108h1v1h-1zM657 105h1v1h-1zM847 103h1v1h-1zM521 108h1v1h-1zM770 115h1v1h-1zM750 171h1v1h-1zM968 161h1v1h-1zM522 121h1v1h-1zM398 147h1v1h-1zM671 113h1v1h-1zM347 105h1v1h-1zM577 122h1v1h-1zM1198 149h1v1h-1zM583 120h1v1h-1zM474 167h1v1h-1zM668 153h1v1h-1zM1010 164h1v1h-1zM349 116h1v1h-1zM691 97h1v1h-1zM1159 117h1v1h-1zM1054 133h1v1h-1zM382 122h1v1h-1zM554 93h1v1h-1zM472 139h1v1h-1zM360 116h1v1h-1zM729 135h1v1h-1zM458 148h1v1h-1zM575 149h1v1h-1zM956 102h1v1h-1zM523 113h1v1h-1zM1000 123h1v1h-1zM693 161h1v1h-1zM542 114h1v1h-1zM654 108h1v1h-1zM368 92h1v1h-1zM923 136h1v1h-1zM1090 170h1v1h-1zM610 145h1v1h-1zM1194 108h1v1h-1zM978 145h1v1h-1zM1228 161h1v1h-1zM551 142h1v1h-1zM414 125h1v1h-1zM699 95h1v1h-1zM690 117h1v1h-1zM797 113h1v1h-1zM479 123h1v1h-1zM777 104h1v1h-1zM955 110h1v1h-1zM417 118h1v1h-1zM727 102h1v1h-1zM878 148h1v1h-1zM850 147h1v1h-1zM352 122h1v1h-1zM672 95h1v1h-1zM710 94h1v1h-1zM796 138h1v1h-1zM771 117h1v1h-1zM568 92h1v1h-1zM656 163h1v1h-1zM862 111h1v1h-1zM958 105h1v1h-1zM771 140h1v1h-1zM1227 120h1v1h-1zM872 167h1v1h-1zM1055 141h1v1h-1zM914 124h1v1h-1zM721 113h1v1h-1zM1110 162h1v1h-1zM689 165h1v1h-1zM366 101h1v1h-1zM807 115h1v1h-1zM669 170h1v1h-1zM471 106h1v1h-1zM545 146h1v1h-1zM550 90h1v1h-1zM841 122h1v1h-1zM555 130h1v1h-1zM941 135h1v1h-1zM917 136h1v1h-1zM1111 169h1v1h-1zM644 118h1v1h-1zM1163 116h1v1h-1zM1003 147h1v1h-1zM975 169h1v1h-1zM1105 103h1v1h-1zM914 130h1v1h-1zM860 120h1v1h-1zM599 151h1v1h-1zM832 109h1v1h-1zM564 117h1v1h-1zM497 132h1v1h-1zM448 95h1v1h-1zM395 98h1v1h-1zM992 99h1v1h-1zM754 153h1v1h-1zM782 103h1v1h-1zM1144 161h1v1h-1zM380 111h1v1h-1zM807 155h1v1h-1zM699 149h1v1h-1zM567 149h1v1h-1zM637 117h1v1h-1zM1044 159h1v1h-1zM1109 137h1v1h-1zM725 148h1v1h-1zM916 158h1v1h-1zM1083 100h1v1h-1zM684 145h1v1h-1zM547 105h1v1h-1zM343 138h1v1h-1zM1215 170h1v1h-1zM456 146h1v1h-1zM724 142h1v1h-1zM703 167h1v1h-1zM1259 94h1v1h-1zM1000 100h1v1h-1zM370 113h1v1h-1zM1017 171h1v1h-1zM443 117h1v1h-1zM355 134h1v1h-1zM784 121h1v1h-1zM621 156h1v1h-1zM1118 113h1v1h-1zM698 141h1v1h-1zM1049 170h1v1h-1zM696 147h1v1h-1zM843 156h1v1h-1zM468 104h1v1h-1zM431 167h1v1h-1zM566 130h1v1h-1zM443 117h1v1h-1zM348 136h1v1h-1zM465 141h1v1h-1zM588 109h1v1h-1zM783 120h1v1h-1zM574 94h1v1h-1zM391 163h1v1h-1zM621 96h1v1h-1zM502 130h1v1h-1zM1267 107h1v1h-1zM1145 130h1v1h-1zM720 156h1v1h-1zM702 95h1v1h-1zM848 144h1v1h-1zM916 113h1v1h-1zM1213 161h1v1h-1zM1265 126h1v1h-1zM1114 149h1v1h-1zM495 92h1v1h-1zM489 100h1v1h-1zM400 119h1v1h-1zM1038 115h1v1h-1zM813 91h1v1h-1zM528 169h1v1h-1zM340 133h1v1h-1zM1092 155h1v1h-1zM1021 123h1v1h-1zM1085 158h1v1h-1zM1052 171h1v1h-1zM425 168h1v1h-1zM708 148h1v1h-1zM565 165h1v1h-1zM352 137h1v1h-1zM544 122h1v1h-1zM677 144h1v1h-1zM1092 120h1v1h-1zM930 119h1v1h-1zM592 164h1v1h-1zM632 98h1v1h-1zM645 151h1v1h-1zM529 151h1v1h-1zM843 146h1v1h-1zM497 99h1v1h-1zM464 119h1v1h-1zM735 91h1v1h-1zM802 123h1v1h-1zM632 134h1v1h-1zM1225 107h1v1h-1zM1158 116h1v1h-1zM1039 99h1v1h-1zM1258 125h1v1h-1zM1235 108h1v1h-1zM714 148h1v1h-1zM497 112h1v1h-1zM967 168h1v1h-1zM633 105h1v1h-1zM666 171h1v1h-1zM469 142h1v1h-1zM685 143h1v1h-1zM530 141h1v1h-1zM1164 160h1v1h-1zM921 131h1v1h-1zM864 99h1v1h-1zM1117 147h1v1h-1zM756 145h1v1h-1zM724 122h1v1h-1zM546 139h1v1h-1zM868 132h1v1h-1zM360 141h1v1h-1zM750 139h1v1h-1zM889 166h1v1h-1zM473 128h1v1h-1zM1263 151h1v1h-1zM624 150h1v1h-1zM1260 123h1v1h-1zM1145 100h1v1h-1zM1261 130h1v1h-1zM550 159h1v1h-1zM940 167h1v1h-1zM1110 155h1v1h-1zM811 171h1v1h-1zM391 161h1v1h-1zM999 111h1v1h-1zM1089 127h1v1h-1zM834 161h1v1h-1zM514 113h1v1h-1zM935 96h1v1h-1zM852 155h1v1h-1zM791 110h1v1h-1zM1082 160h1v1h-1zM1055 135h1v1h-1zM1181 155h1v1h-1zM473 120h1v1h-1zM424 93h1v1h-1zM655 161h1v1h-1zM1114 100h1v1h-1zM501 122h1v1h-1zM1128 141h1v1h-1zM1178 96h1v1h-1zM1259 107h1v1h-1zM921 162h1v1h-1zM1014 106h1v1h-1zM958 125h1v1h-1zM344 118h1v1h-1zM626 142h1v1h-1zM592 139h1v1h-1zM983 105h1v1h-1zM450 147h1v1h-1zM768 101h1v1h-1zM439 167h1v1h-1zM903 119h1v1h-1zM514 172h1v1h-1zM980 150h1v1h-1zM669 115h1v1h-1zM714 102h1v1h-1zM923 125h1v1h-1zM1101 124h1v1h-1zM759 132h1v1h-1zM1215 118h1v1h-1zM991 109h1v1h-1zM875 113h1v1h-1zM1150 113h1v1h-1zM1133 145h1v1h-1zM758 167h1v1h-1zM694 151h1v1h-1zM895 127h1v1h-1zM390 124h1v1h-1zM594 126h1v1h-1zM1227 114h1v1h-1zM983 145h1v1h-1zM560 124h1v1h-1zM454 163h1v1h-1zM567 124h1v1h-1zM651 157h1v1h-1zM1129 138h1v1h-1zM843 98h1v1h-1zM1173 97h1v1h-1zM672 121h1v1h-1zM1010 145h1v1h-1zM653 164h1v1h-1zM1223 92h1v1h-1zM925 128h1v1h-1zM670 128h1v1h-1zM627 145h1v1h-1zM899 170h1v1h-1zM1248 171h1v1h-1zM701 158h1v1h-1zM941 147h1v1h-1zM1268 95h1v1h-1zM764 123h1v1h-1zM947 108h1v1h-1zM1260 107h1v1h-1zM678 102h1v1h-1zM701 151h1v1h-1zM409 104h1v1h-1zM940 141h1v1h-1zM1028 111h1v1h-1zM1093 150h1v1h-1zM1059 100h1v1h-1zM771 91h1v1h-1zM1138 167h1v1h-1zM1172 92h1v1h-1zM660 134h1v1h-1zM832 99h1v1h-1zM1072 115h1v1h-1zM807 100h1v1h-1zM864 101h1v1h-1zM413 132h1v1h-1zM606 154h1v1h-1zM562 124h1v1h-1zM381 108h1v1h-1zM755 136h1v1h-1zM762 160h1v1h-1zM428 160h1v1h-1zM476 170h1v1h-1zM823 123h1v1h-1zM905 161h1v1h-1zM1236 124h1v1h-1zM340 103h1v1h-1zM1099 150h1v1h-1zM1000 103h1v1h-1zM829 92h1v1h-1zM434 115h1v1h-1zM1238 143h1v1h-1zM1127 94h1v1h-1zM721 96h1v1h-1zM575 99h1v1h-1zM1194 117h1v1h-1zM790 144h1v1h-1zM1163 168h1v1h-1zM864 131h1v1h-1zM1180 122h1v1h-1zM611 151h1v1h-1zM573 120h1v1h-1zM733 129h1v1h-1zM667 125h1v1h-1zM754 94h1v1h-1zM1116 95h1v1h-1zM826 135h1v1h-1zM706 108h1v1h-1zM423 120h1v1h-1zM626 130h1v1h-1zM546 151h1v1h-1zM788 91h1v1h-1zM712 169h1v1h-1zM337 139h1v1h-1zM1233 120h1v1h-1zM892 120h1v1h-1zM613 140h1v1h-1zM884 116h1v1h-1zM798 132h1v1h-1zM1039 94h1v1h-1zM417 111h1v1h-1zM584 155h1v1h-1zM730 161h1v1h-1zM708 113h1v1h-1zM969 97h1v1h-1zM1255 158h1v1h-1zM638 116h1v1h-1zM1100 155h1v1h-1zM934 95h1v1h-1zM1048 94h1v1h-1zM917 135h1v1h-1zM1202 142h1v1h-1zM351 167h1v1h-1zM1038 138h1v1h-1zM335 150h1v1h-1zM723 146h1v1h-1zM1255 165h1v1h-1zM400 154h1v1h-1zM744 152h1v1h-1zM685 127h1v1h-1zM741 100h1v1h-1zM631 150h1v1h-1zM397 100h1v1h-1zM1114 145h1v1h-1zM845 99h1v1h-1zM441 115h1v1h-1zM1227 136h1v1h-1zM1197 107h1v1h-1zM720 134h1v1h-1zM1119 100h1v1h-1zM1151 129h1v1h-1zM359 125h1v1h-1zM685 145h1v1h-1zM1202 130h1v1h-1zM978 122h1v1h-1zM1062 99h1v1h-1zM1028 104h1v1h-1zM881 107h1v1h-1zM655 103h1v1h-1zM659 138h1v1h-1zM819 122h1v1h-1zM870 159h1v1h-1zM667 138h1v1h-1zM782 170h1v1h-1zM638 147h1v1h-1zM550 111h1v1h-1zM1017 137h1v1h-1zM572 95h1v1h-1zM1105 121h1v1h-1zM1003 125h1v1h-1zM911 136h1v1h-1zM1247 165h1v1h-1zM758 130h1v1h-1zM547 152h1v1h-1zM426 115h1v1h-1zM1127 93h1v1h-1zM987 137h1v1h-1zM848 117h1v1h-1zM472 168h1v1h-1zM1049 156h1v1h-1zM422 154h1v1h-1zM535 106h1v1h-1zM833 140h1v1h-1zM444 153h1v1h-1zM877 164h1v1h-1zM1198 147h1v1h-1zM672 168h1v1h-1zM1005 114h1v1h-1zM1136 150h1v1h-1zM579 110h1v1h-1zM349 134h1v1h-1zM568 114h1v1h-1zM568 101h1v1h-1zM786 112h1v1h-1zM598 113h1v1h-1zM809 162h1v1h-1zM480 160h1v1h-1zM1133 140h1v1h-1zM841 150h1v1h-1zM832 144h1v1h-1zM1194 154h1v1h-1zM574 94h1v1h-1zM1210 120h1v1h-1zM1070 109h1v1h-1zM756 120h1v1h-1zM1015 167h1v1h-1zM805 136h1v1h-1zM658 109h1v1h-1zM1223 99h1v1h-1zM1214 144h1v1h-1zM397 164h1v1h-1zM426 136h1v1h-1zM443 171h1v1h-1zM621 162h1v1h-1zM388 145h1v1h-1zM394 92h1v1h-1zM867 171h1v1h-1zM974 160h1v1h-1zM1068 133h1v1h-1zM403 133h1v1h-1zM503 133h1v1h-1zM663 131h1v1h-1zM516 148h1v1h-1zM722 130h1v1h-1zM404 130h1v1h-1zM854 170h1v1h-1zM858 101h1v1h-1zM612 118h1v1h-1zM990 167h1v1h-1zM1247 168h1v1h-1zM1200 160h1v1h-1zM1209 92h1v1h-1zM790 138h1v1h-1zM975 140h1v1h-1zM906 167h1v1h-1zM411 133h1v1h-1zM1232 93h1v1h-1zM435 161h1v1h-1zM1230 92h1v1h-1zM360 158h1v1h-1zM977 133h1v1h-1zM875 152h1v1h-1zM1089 90h1v1h-1zM394 155h1v1h-1zM1247 158h1v1h-1zM713 118h1v1h-1zM656 91h1v1h-1zM1054 112h1v1h-1zM880 133h1v1h-1zM645 145h1v1h-1zM758 109h1v1h-1zM1159 104h1v1h-1zM471 111h1v1h-1zM780 154h1v1h-1zM643 110h1v1h-1zM945 111h1v1h-1zM821 111h1v1h-1zM1154 105h1v1h-1zM548 115h1v1h-1zM640 150h1v1h-1zM964 155h1v1h-1zM838 96h1v1h-1zM1048 110h1v1h-1zM535 124h1v1h-1zM1260 120h1v1h-1zM665 165h1v1h-1zM1261 122h1v1h-1zM457 155h1v1h-1zM1065 118h1v1h-1zM1073 121h1v1h-1zM600 139h1v1h-1zM1027 129h1v1h-1zM1099 91h1v1h-1zM799 121h1v1h-1zM391 165h1v1h-1zM465 107h1v1h-1zM1155 169h1v1h-1zM1206 118h1v1h-1zM1205 102h1v1h-1zM1002 168h1v1h-1zM511 101h1v1h-1zM968 162h1v1h-1zM1013 168h1v1h-1zM757 121h1v1h-1zM443 112h1v1h-1zM1213 96h1v1h-1zM504 118h1v1h-1zM376 115h1v1h-1zM502 100h1v1h-1zM825 134h1v1h-1zM864 153h1v1h-1zM825 168h1v1h-1zM407 108h1v1h-1zM402 115h1v1h-1zM1045 166h1v1h-1zM804 103h1v1h-1zM641 137h1v1h-1zM607 155h1v1h-1zM1244 128h1v1h-1zM897 159h1v1h-1zM767 106h1v1h-1zM1217 170h1v1h-1zM353 153h1v1h-1zM707 94h1v1h-1zM483 104h1v1h-1zM1022 107h1v1h-1zM348 108h1v1h-1zM1081 131h1v1h-1zM944 128h1v1h-1zM502 91h1v1h-1zM616 93h1v1h-1zM575 141h1v1h-1zM677 129h1v1h-1zM916 116h1v1h-1zM665 162h1v1h-1zM876 124h1v1h-1zM838 128h1v1h-1zM642 165h1v1h-1zM549 167h1v1h-1zM1132 162h1v1h-1zM483 132h1v1h-1zM1255 114h1v1h-1zM491 149h1v1h-1zM551 138h1v1h-1zM478 168h1v1h-1zM597 98h1v1h-1zM976 118h1v1h-1zM856 131h1v1h-1zM1197 132h1v1h-1zM686 90h1v1h-1zM797 112h1v1h-1zM870 142h1v1h-1zM765 97h1v1h-1zM798 130h1v1h-1zM933 170h1v1h-1zM593 126h1v1h-1zM410 156h1v1h-1zM550 158h1v1h-1zM1080 111h1v1h-1zM1179 131h1v1h-1zM731 136h1v1h-1zM1219 130h1v1h-1zM783 114h1v1h-1zM1121 131h1v1h-1zM652 106h1v1h-1zM532 158h1v1h-1zM1085 170h1v1h-1zM1192 146h1v1h-1zM1080 148h1v1h-1zM1091 156h1v1h-1zM496 157h1v1h-1zM615 110h1v1h-1zM1194 92h1v1h-1zM811 118h1v1h-1zM1074 140h1v1h-1zM1186 166h1v1h-1zM936 95h1v1h-1zM957 99h1v1h-1zM1253 161h1v1h-1zM622 105h1v1h-1zM983 152h1v1h-1zM1256 141h1v1h-1zM448 150h1v1h-1zM385 161h1v1h-1zM1053 154h1v1h-1zM1151 137h1v1h-1zM1217 142h1v1h-1zM792 122h1v1h-1zM662 92h1v1h-1zM481 155h1v1h-1zM545 144h1v1h-1zM1059 147h1v1h-1zM815 116h1v1h-1zM587 105h1v1h-1zM939 146h1v1h-1zM1216 117h1v1h-1zM1201 165h1v1h-1zM603 168h1v1h-1zM912 169h1v1h-1zM1058 117h1v1h-1zM593 133h1v1h-1zM789 93h1v1h-1zM1141 134h1v1h-1zM775 151h1v1h-1zM565 106h1v1h-1zM876 110h1v1h-1zM638 96h1v1h-1zM379 119h1v1h-1zM825 168h1v1h-1zM931 124h1v1h-1zM712 109h1v1h-1zM775 169h1v1h-1zM445 126h1v1h-1zM974 153h1v1h-1zM852 143h1v1h-1zM1212 164h1v1h-1zM566 134h1v1h-1zM1267 133h1v1h-1zM508 153h1v1h-1zM384 102h1v1h-1zM848 112h1v1h-1zM1006 150h1v1h-1zM630 153h1v1h-1zM939 148h1v1h-1zM759 125h1v1h-1zM430 129h1v1h-1zM1227 163h1v1h-1zM383 96h1v1h-1zM583 147h1v1h-1zM741 100h1v1h-1zM730 137h1v1h-1zM1030 123h1v1h-1zM941 146h1v1h-1zM909 94h1v1h-1zM998 101h1v1h-1zM381 129h1v1h-1zM346 96h1v1h-1zM698 128h1v1h-1zM429 168h1v1h-1zM1131 130h1v1h-1zM883 116h1v1h-1zM1255 100h1v1h-1zM616 108h1v1h-1zM1144 132h1v1h-1zM716 123h1v1h-1zM1164 111h1v1h-1zM1074 148h1v1h-1zM751 120h1v1h-1zM741 127h1v1h-1zM627 141h1v1h-1zM716 115h1v1h-1zM1056 127h1v1h-1zM775 162h1v1h-1zM757 121h1v1h-1zM1174 170h1v1h-1zM1069 123h1v1h-1zM961 151h1v1h-1zM608 149h1v1h-1zM1223 144h1v1h-1zM959 126h1v1h-1zM944 109h1v1h-1zM1054 134h1v1h-1zM1251 118h1v1h-1zM999 91h1v1h-1zM721 153h1v1h-1zM574 140h1v1h-1zM538 123h1v1h-1zM1264 106h1v1h-1zM1188 95h1v1h-1zM878 157h1v1h-1zM1117 122h1v1h-1zM885 148h1v1h-1zM1046 151h1v1h-1zM874 111h1v1h-1zM993 136h1v1h-1zM842 171h1v1h-1zM458 154h1v1h-1zM635 150h1v1h-1zM1223 113h1v1h-1zM863 133h1v1h-1zM795 104h1v1h-1zM918 163h1v1h-1zM953 114h1v1h-1zM1088 124h1v1h-1zM466 140h1v1h-1zM763 133h1v1h-1zM1262 137h1v1h-1zM1226 119h1v1h-1zM1043 96h1v1h-1zM612 147h1v1h-1zM979 158h1v1h-1zM687 112h1v1h-1zM667 134h1v1h-1zM353 121h1v1h-1zM948 102h1v1h-1zM622 162h1v1h-1zM1208 110h1v1h-1zM497 100h1v1h-1zM411 155h1v1h-1zM1025 112h1v1h-1zM790 147h1v1h-1zM356 157h1v1h-1zM1138 107h1v1h-1zM991 147h1v1h-1zM647 162h1v1h-1zM535 129h1v1h-1zM625 126h1v1h-1zM1094 137h1v1h-1zM903 171h1v1h-1zM540 108h1v1h-1zM913 102h1v1h-1zM1236 118h1v1h-1zM744 125h1v1h-1zM1108 165h1v1h-1zM966 104h1v1h-1zM664 148h1v1h-1zM533 162h1v1h-1zM1150 109h1v1h-1zM672 109h1v1h-1zM1005 94h1v1h-1zM984 95h1v1h-1zM1121 135h1v1h-1zM878 98h1v1h-1zM372 119h1v1h-1zM1256 139h1v1h-1zM1141 95h1v1h-1zM426 92h1v1h-1zM985 104h1v1h-1zM586 145h1v1h-1zM984 116h1v1h-1zM769 114h1v1h-1zM858 119h1v1h-1zM668 110h1v1h-1zM605 111h1v1h-1zM345 115h1v1h-1zM887 112h1v1h-1zM436 159h1v1h-1zM771 132h1v1h-1zM623 163h1v1h-1zM1039 141h1v1h-1zM950 147h1v1h-1zM800 124h1v1h-1zM697 131h1v1h-1zM770 133h1v1h-1zM831 155h1v1h-1zM1169 108h1v1h-1zM351 115h1v1h-1zM360 155h1v1h-1zM913 113h1v1h-1zM510 161h1v1h-1zM1116 146h1v1h-1zM980 151h1v1h-1zM757 123h1v1h-1zM850 162h1v1h-1zM1262 165h1v1h-1zM1115 96h1v1h-1zM562 170h1v1h-1zM841 132h1v1h-1zM621 161h1v1h-1zM816 171h1v1h-1zM401 171h1v1h-1zM343 102h1v1h-1zM696 142h1v1h-1zM434 136h1v1h-1zM1213 126h1v1h-1zM1047 139h1v1h-1zM877 104h1v1h-1zM766 164h1v1h-1zM964 108h1v1h-1zM750 135h1v1h-1zM647 137h1v1h-1zM924 91h1v1h-1zM537 144h1v1h-1zM531 96h1v1h-1zM1046 117h1v1h-1zM1230 136h1v1h-1zM425 142h1v1h-1zM577 157h1v1h-1zM1011 152h1v1h-1zM384 93h1v1h-1zM1080 102h1v1h-1zM520 92h1v1h-1zM484 129h1v1h-1zM1231 116h1v1h-1zM574 158h1v1h-1zM503 142h1v1h-1zM908 167h1v1h-1zM371 136h1v1h-1zM690 158h1v1h-1zM567 149h1v1h-1zM504 131h1v1h-1zM1240 110h1v1h-1zM592 165h1v1h-1zM964 95h1v1h-1zM505 109h1v1h-1zM603 159h1v1h-1zM988 170h1v1h-1zM960 141h1v1h-1zM690 149h1v1h-1zM794 95h1v1h-1zM792 121h1v1h-1zM829 94h1v1h-1zM356 171h1v1h-1zM679 117h1v1h-1zM469 139h1v1h-1zM1190 105h1v1h-1zM800 131h1v1h-1zM1050 136h1v1h-1zM555 106h1v1h-1zM1011 96h1v1h-1zM1143 93h1v1h-1zM508 128h1v1h-1zM1123 141h1v1h-1zM1031 152h1v1h-1zM1009 94h1v1h-1zM1106 102h1v1h-1zM483 93h1v1h-1zM357 162h1v1h-1zM688 97h1v1h-1zM374 159h1v1h-1zM895 165h1v1h-1zM365 99h1v1h-1zM599 106h1v1h-1zM435 106h1v1h-1zM932 104h1v1h-1zM489 134h1v1h-1zM683 102h1v1h-1zM864 132h1v1h-1zM695 129h1v1h-1zM367 140h1v1h-1zM512 118h1v1h-1zM339 163h1v1h-1zM882 122h1v1h-1zM839 167h1v1h-1zM454 121h1v1h-1zM996 121h1v1h-1zM994 164h1v1h-1zM368 113h1v1h-1zM605 152h1v1h-1zM1067 147h1v1h-1zM1199 105h1v1h-1zM700 160h1v1h-1zM1050 99h1v1h-1zM1251 151h1v1h-1zM1144 120h1v1h-1zM899 169h1v1h-1zM1174 137h1v1h-1zM1167 172h1v1h-1zM1119 144h1v1h-1zM1233 102h1v1h-1zM709 136h1v1h-1zM454 154h1v1h-1zM388 142h1v1h-1zM593 116h1v1h-1zM900 106h1v1h-1zM751 160h1v1h-1zM1258 112h1v1h-1zM674 147h1v1h-1zM508 160h1v1h-1zM517 136h1v1h-1zM649 90h1v1h-1zM331 90h1v1h-1zM639 113h1v1h-1zM1262 142h1v1h-1zM391 149h1v1h-1zM549 129h1v1h-1zM1009 160h1v1h-1z" fill="#2a1c8a" opacity="0.75" clip-path="url(#surf)"/>
</svg>
</div>
<div id="plot" style="position:absolute;left:0;top:0;width:1306px;height:826px">
<svg width="1306" height="826" style="position:absolute;left:0;top:0">
<line x1="319" y1="328.5" x2="1282" y2="328.5" stroke="#8e8e8e" stroke-width="1" stroke-dasharray="1,1"/>
<line x1="319" y1="381.5" x2="1282" y2="381.5" stroke="#8e8e8e" stroke-width="1" stroke-dasharray="1,1"/>
<line x1="319" y1="434.5" x2="1282" y2="434.5" stroke="#8e8e8e" stroke-width="1" stroke-dasharray="1,1"/>
<line x1="319" y1="539.5" x2="1282" y2="539.5" stroke="#8e8e8e" stroke-width="1" stroke-dasharray="1,1"/>
<line x1="319" y1="592.5" x2="1282" y2="592.5" stroke="#8e8e8e" stroke-width="1" stroke-dasharray="1,1"/>
<line x1="319" y1="645.5" x2="1282" y2="645.5" stroke="#8e8e8e" stroke-width="1" stroke-dasharray="1,1"/>
<line x1="414.5" y1="276" x2="414.5" y2="697" stroke="#8e8e8e" stroke-width="1" stroke-dasharray="1,1"/>
<line x1="511.5" y1="276" x2="511.5" y2="697" stroke="#8e8e8e" stroke-width="1" stroke-dasharray="1,1"/>
<line x1="608.5" y1="276" x2="608.5" y2="697" stroke="#8e8e8e" stroke-width="1" stroke-dasharray="1,1"/>
<line x1="704.5" y1="276" x2="704.5" y2="697" stroke="#8e8e8e" stroke-width="1" stroke-dasharray="1,1"/>
<line x1="994.5" y1="276" x2="994.5" y2="697" stroke="#8e8e8e" stroke-width="1" stroke-dasharray="1,1"/>
<line x1="1090.5" y1="276" x2="1090.5" y2="697" stroke="#8e8e8e" stroke-width="1" stroke-dasharray="1,1"/>
<line x1="1187.5" y1="276" x2="1187.5" y2="697" stroke="#8e8e8e" stroke-width="1" stroke-dasharray="1,1"/>
<line x1="897.5" y1="276" x2="897.5" y2="697" stroke="#8e8e8e" stroke-width="1" stroke-dasharray="1,1"/>
<line x1="318.5" y1="487.5" x2="1282.5" y2="487.5" stroke="#9a9a9a" stroke-width="1"/>
<line x1="801.5" y1="275.5" x2="801.5" y2="697.5" stroke="#9a9a9a" stroke-width="1"/>
<path d="M318.5 485V490M337.5 485V490M357.5 485V490M376.5 485V490M395.5 485V490M414.5 485V490M434.5 485V490M453.5 485V490M472.5 485V490M492.5 485V490M511.5 485V490M530.5 485V490M549.5 485V490M569.5 485V490M588.5 485V490M607.5 485V490M626.5 485V490M646.5 485V490M665.5 485V490M684.5 485V490M704.5 485V490M723.5 485V490M742.5 485V490M761.5 485V490M781.5 485V490M800.5 485V490M819.5 485V490M839.5 485V490M858.5 485V490M877.5 485V490M896.5 485V490M916.5 485V490M935.5 485V490M954.5 485V490M974.5 485V490M993.5 485V490M1012.5 485V490M1031.5 485V490M1051.5 485V490M1070.5 485V490M1089.5 485V490M1108.5 485V490M1128.5 485V490M1147.5 485V490M1166.5 485V490M1186.5 485V490M1205.5 485V490M1224.5 485V490M1243.5 485V490M1263.5 485V490M1282.5 485V490M799 275.5H804M799 286.5H804M799 296.5H804M799 307.5H804M799 317.5H804M799 328.5H804M799 338.5H804M799 349.5H804M799 359.5H804M799 370.5H804M799 381.5H804M799 391.5H804M799 402.5H804M799 412.5H804M799 423.5H804M799 433.5H804M799 444.5H804M799 454.5H804M799 465.5H804M799 475.5H804M799 486.5H804M799 497.5H804M799 507.5H804M799 518.5H804M799 528.5H804M799 539.5H804M799 549.5H804M799 560.5H804M799 570.5H804M799 581.5H804M799 592.5H804M799 602.5H804M799 613.5H804M799 623.5H804M799 634.5H804M799 644.5H804M799 655.5H804M799 665.5H804M799 676.5H804M799 686.5H804M799 697.5H804" stroke="#9a9a9a" stroke-width="1"/>
<path d="M328.5 355.5h1.5M347.8 355.5h1.5M367.1 355.5h1.5M386.4 355.5h1.5M405.7 355.5h1.5M425.0 355.5h1.5M444.3 355.5h1.5M463.6 355.5h1.5M482.9 355.5h1.5M502.2 355.5h1.5M521.5 355.5h1.5M540.8 355.5h1.5M560.1 355.5h1.5M579.4 355.5h1.5M598.7 355.5h1.5M618.0 355.5h1.5M637.3 355.5h1.5M656.6 355.5h1.5M675.9 355.5h1.5M695.2 355.5h1.5M714.5 355.5h1.5M733.8 355.5h1.5M753.1 355.5h1.5M772.4 355.5h1.5M791.7 355.5h1.5M811.0 355.5h1.5M830.3 355.5h1.5M849.6 355.5h1.5M868.9 355.5h1.5M888.2 355.5h1.5M907.5 355.5h1.5M926.8 355.5h1.5M946.1 355.5h1.5M965.4 355.5h1.5M984.7 355.5h1.5M1004.0 355.5h1.5M1023.3 355.5h1.5M1042.6 355.5h1.5M1061.9 355.5h1.5M1081.2 355.5h1.5M1100.5 355.5h1.5M1119.8 355.5h1.5M1139.1 355.5h1.5M1158.4 355.5h1.5M1177.7 355.5h1.5M1197.0 355.5h1.5M1216.3 355.5h1.5M1235.6 355.5h1.5M1254.9 355.5h1.5M1274.2 355.5h1.5" stroke="#3c3c3c" stroke-width="1.5"/>
<rect x="318.5" y="275.5" width="964.0" height="422.0" fill="none" stroke="#9a9a9a" stroke-width="1"/>
<line x1="414.5" y1="275.5" x2="414.5" y2="697.5" stroke="#dddddd" stroke-width="3"/>
<line x1="414.5" y1="275.5" x2="414.5" y2="697.5" stroke="#666" stroke-width="1"/>
<polyline points="318.5,504.7 319.4,509.2 320.2,543.2 320.9,542.1 321.5,546.1 322.4,558.9 323.0,581.9 324.0,612.3 324.6,596.7 325.0,591.5 325.9,581.3 326.8,606.8 327.7,571.2 328.5,573.5 329.4,552.2 330.4,564.6 331.3,558.8 332.2,585.9 333.0,573.4 333.7,558.6 334.2,552.0 334.8,551.6 335.4,546.6 336.1,564.0 336.6,570.2 337.4,574.9 337.9,568.1 338.5,565.0 339.5,577.7 340.2,569.6 340.9,579.6 341.6,573.1 342.5,586.1 343.3,596.6 344.0,589.3 344.9,590.1 345.7,581.2 346.2,594.4 347.0,592.6 347.9,590.8 348.8,615.7 349.6,585.0 350.5,583.7 351.4,564.3 352.2,578.1 353.0,589.7 353.7,594.7 354.5,580.6 355.0,574.5 355.5,577.4 356.3,587.3 356.7,577.5 357.2,629.9 357.7,587.5 358.7,595.5 359.5,578.4 360.2,587.5 360.9,578.8 361.6,584.3 362.6,571.4 363.2,581.5 364.1,586.6 364.9,576.6 365.6,568.3 366.4,580.7 367.3,580.4 368.2,591.1 368.8,580.4 369.5,595.8 370.0,592.6 370.6,566.7 371.2,621.1 371.9,592.2 372.4,592.0 373.2,591.3 373.9,567.3 374.5,587.2 375.3,580.0 376.2,571.0 377.0,576.6 377.9,577.8 378.8,584.6 379.8,625.0 380.3,607.9 380.8,554.9 381.6,580.3 382.1,587.4 382.8,609.7 383.5,567.3 384.5,580.9 385.0,597.1 385.7,593.6 386.3,602.1 386.9,572.7 387.7,592.9 388.2,573.3 389.2,586.0 389.6,591.4 390.6,595.9 391.6,610.0 392.4,581.7 393.2,579.5 394.1,610.8 395.0,595.8 395.8,609.2 396.3,600.8 396.7,589.6 397.4,593.5 397.9,586.1 398.5,583.8 399.1,627.8 399.7,597.2 400.4,590.2 401.0,608.1 401.5,613.1 402.5,579.3 403.1,608.7 403.7,617.4 404.4,632.6 405.1,581.3 405.8,629.9 406.5,586.9 407.0,582.8 407.6,633.1 408.2,588.1 408.6,581.6 409.6,605.4 410.1,595.9 410.7,584.2 411.4,551.6 411.9,519.1 412.4,519.9 412.9,477.4 413.6,471.2 414.3,364.4 415.1,360.5 416.1,450.7 416.7,452.7 417.5,507.2 418.0,544.4 419.0,564.7 419.6,580.2 420.1,584.4 420.8,588.2 421.4,584.9 422.1,608.0 423.1,581.8 423.7,596.2 424.4,581.0 425.0,555.8 425.9,560.3 426.9,592.6 427.6,549.8 428.0,564.4 429.0,547.0 429.8,582.2 430.4,565.7 431.0,585.5 431.6,570.2 432.6,599.4 433.4,581.7 434.2,592.3 434.7,569.9 435.6,588.2 436.2,582.6 437.0,581.1 437.9,592.4 438.6,579.6 439.4,573.7 439.9,600.6 440.7,574.4 441.4,591.6 442.0,570.1 442.9,562.4 443.5,569.7 444.4,590.5 445.2,582.1 446.0,592.1 446.7,581.5 447.5,594.8 448.0,580.6 448.6,596.4 449.1,606.3 449.6,591.7 450.4,565.5 451.3,597.9 452.3,606.5 452.8,577.4 453.5,629.8 454.2,578.5 454.9,598.2 455.8,570.9 456.5,568.9 457.3,583.7 458.0,600.9 458.6,559.4 459.1,578.0 459.6,576.8 460.6,588.0 461.0,610.7 461.7,583.8 462.3,585.8 463.3,604.4 464.3,629.5 465.2,583.0 466.0,635.6 466.7,604.0 467.3,582.7 467.8,595.7 468.8,568.1 469.5,563.3 470.1,581.7 471.0,633.2 472.0,587.0 473.0,583.6 473.7,560.7 474.5,568.1 475.4,576.8 476.0,571.0 477.0,564.8 477.7,589.0 478.6,577.2 479.3,628.1 479.8,598.0 480.5,610.3 481.2,616.6 482.2,578.9 482.7,582.6 483.3,592.4 484.2,576.3 485.0,585.0 485.6,554.0 486.2,601.6 487.1,591.3 487.7,555.5 488.6,617.1 489.4,580.9 490.1,583.5 490.6,599.2 491.2,621.8 491.7,572.4 492.6,583.7 493.5,561.2 494.1,573.0 495.1,573.3 495.7,602.5 496.1,568.9 496.7,564.3 497.4,593.5 498.0,582.6 498.7,596.0 499.6,578.3 500.3,589.5 501.1,583.6 501.7,568.2 502.4,563.4 503.2,585.1 503.9,572.1 504.5,578.3 505.1,579.9 505.8,562.4 506.2,577.5 507.0,582.1 507.5,576.3 507.9,569.4 508.5,585.5 509.1,577.6 510.0,549.5 510.5,552.1 511.3,515.6 511.8,514.8 512.4,517.5 512.8,540.6 513.5,564.8 514.0,565.0 514.9,568.0 515.7,596.7 516.6,573.5 517.1,580.3 517.6,606.8 518.1,590.2 518.9,577.5 519.5,604.8 520.3,595.8 520.7,608.9 521.2,592.3 521.7,588.5 522.6,596.0 523.2,583.3 524.0,600.6 524.6,597.7 525.4,602.5 526.4,626.2 526.9,585.1 527.6,589.1 528.4,608.6 529.3,651.3 530.3,583.3 530.8,584.0 531.2,584.5 531.9,557.9 532.7,572.3 533.4,580.5 534.2,596.1 535.1,589.2 535.9,603.1 536.6,568.7 537.4,588.2 538.4,576.0 539.0,587.7 539.7,578.5 540.7,588.7 541.1,613.4 542.0,579.3 543.0,594.9 543.6,579.1 544.2,591.9 544.8,645.0 545.5,566.2 546.1,595.7 546.6,614.7 547.0,594.9 547.5,618.1 548.1,587.1 549.1,586.4 550.1,583.4 550.9,588.7 551.5,603.8 552.0,578.9 552.9,591.2 553.8,598.6 554.6,585.8 555.3,599.2 556.0,596.2 556.9,588.5 557.8,586.5 558.4,591.5 559.0,572.1 559.9,602.9 560.4,587.1 560.9,595.3 561.9,589.4 562.9,566.0 563.6,574.2 564.6,577.7 565.3,594.6 565.7,601.2 566.4,593.3 567.3,574.8 567.8,586.8 568.4,586.2 569.4,594.0 569.9,577.7 570.5,578.7 571.5,613.3 572.4,575.6 572.8,563.2 573.3,559.2 574.1,612.6 574.8,611.4 575.5,580.6 576.1,585.8 577.0,589.7 577.6,605.3 578.2,584.1 578.8,583.0 579.3,599.8 580.2,554.6 580.9,604.7 581.9,619.2 582.6,588.4 583.2,586.4 583.8,597.7 584.4,576.3 585.2,578.0 585.8,597.8 586.4,580.5 587.0,584.6 587.9,583.9 588.5,588.9 589.2,580.8 590.0,581.8 591.0,587.0 591.8,568.3 592.6,600.8 593.4,608.2 594.2,591.6 594.8,589.7 595.7,588.5 596.4,592.6 597.4,576.5 598.1,612.0 598.9,602.3 599.8,592.1 600.7,591.5 601.6,590.9 602.5,622.0 603.2,642.5 604.0,584.9 604.6,592.8 605.5,537.0 605.9,537.8 606.9,484.2 607.6,392.5 608.1,389.8 609.0,393.7 610.0,473.9 610.6,544.2 611.0,567.2 611.5,551.0 612.2,582.8 612.9,560.9 613.4,536.9 614.1,600.6 614.8,580.2 615.4,578.2 616.0,566.5 616.9,629.1 617.7,610.3 618.7,586.3 619.6,588.8 620.0,586.1 621.0,591.7 621.5,587.2 622.4,545.2 623.4,604.4 623.9,560.0 624.7,574.3 625.2,561.5 625.8,565.1 626.7,582.7 627.2,559.8 628.0,580.5 628.5,627.7 629.5,573.4 630.4,585.2 631.3,578.9 632.1,575.5 632.9,586.7 633.6,588.5 634.6,598.0 635.4,571.9 635.9,596.1 636.3,579.1 637.0,609.6 637.6,583.0 638.4,556.5 639.2,561.7 640.0,592.5 640.6,580.6 641.4,602.8 642.1,605.2 643.1,582.7 643.8,567.8 644.3,585.7 645.0,592.8 645.5,595.9 646.4,606.1 646.9,592.6 647.8,582.5 648.7,608.5 649.5,583.6 650.1,598.0 650.9,594.9 651.5,574.5 652.0,581.6 652.8,594.1 653.4,614.5 654.4,588.4 655.3,566.7 656.3,572.9 657.3,579.5 658.1,575.3 658.6,588.4 659.3,570.7 659.8,595.0 660.4,608.8 661.0,605.5 661.5,576.3 662.1,602.2 662.9,568.6 663.8,595.6 664.7,582.0 665.7,579.6 666.6,593.9 667.4,596.6 668.1,585.8 669.1,580.0 669.9,571.1 670.5,587.1 671.3,573.8 672.2,573.9 672.9,585.2 673.8,591.9 674.4,571.9 675.2,587.0 675.7,606.7 676.3,593.4 677.3,585.7 678.0,589.6 678.6,592.5 679.4,579.1 680.1,600.1 681.0,585.2 681.8,575.9 682.5,579.9 683.1,588.6 684.1,585.2 684.8,585.2 685.2,564.2 686.1,563.9 686.6,587.1 687.5,581.9 688.1,557.6 689.0,580.9 689.8,586.2 690.4,575.8 691.2,567.9 691.7,577.5 692.7,588.9 693.4,582.7 694.1,565.7 694.9,571.6 695.7,566.7 696.5,588.4 697.2,589.0 698.2,562.8 698.9,577.4 699.9,577.5 700.4,590.9 701.1,574.4 701.6,572.0 702.6,539.3 703.5,543.1 704.0,520.9 704.5,518.3 705.3,519.5 706.0,557.4 706.5,567.0 707.0,571.5 707.8,585.8 708.3,597.4 709.3,583.2 709.9,591.1 710.6,587.4 711.4,592.9 712.1,596.7 712.7,572.5 713.6,580.9 714.6,587.7 715.3,572.2 715.8,563.1 716.7,579.3 717.6,554.7 718.4,598.1 719.1,566.4 719.5,566.3 720.5,596.7 721.3,574.9 722.0,579.0 722.8,574.9 723.5,602.1 724.4,573.0 725.3,568.4 725.9,573.0 726.9,610.2 727.5,579.3 728.2,593.8 729.2,573.3 730.0,620.8 730.8,595.2 731.4,621.8 732.4,589.8 733.2,591.0 734.1,601.1 734.7,581.4 735.6,557.5 736.3,579.0 737.1,568.0 738.0,603.9 738.7,579.6 739.2,560.4 740.0,601.8 740.6,559.9 741.2,597.8 742.0,559.6 742.8,567.1 743.6,557.9 744.4,567.5 744.8,577.5 745.5,579.1 745.9,587.9 746.6,580.5 747.0,561.5 747.6,567.9 748.1,558.9 748.9,589.3 749.6,570.0 750.6,598.8 751.3,564.5 751.9,600.7 752.9,587.3 753.7,588.6 754.3,601.4 754.9,595.8 755.6,586.9 756.5,609.2 757.5,577.8 758.4,573.3 759.3,574.1 760.2,576.5 760.9,586.8 761.9,581.2 762.3,597.4 763.2,606.2 764.1,593.8 764.8,589.4 765.5,612.8 766.2,586.4 767.2,586.8 767.7,584.4 768.6,607.2 769.2,609.8 769.8,584.4 770.6,613.2 771.3,608.3 771.8,600.5 772.4,607.8 773.2,591.2 773.9,592.2 774.4,583.6 775.3,589.2 775.9,583.1 776.6,583.7 777.1,563.7 777.8,559.9 778.6,577.2 779.3,599.0 780.2,576.5 781.1,581.1 781.7,575.6 782.1,564.1 782.8,577.3 783.8,617.4 784.2,591.9 785.2,643.4 785.7,578.3 786.2,616.3 786.7,616.5 787.4,613.1 788.0,591.2 788.7,568.8 789.2,591.1 789.9,593.0 790.4,594.8 790.9,571.3 791.4,592.2 792.1,601.4 792.8,610.1 793.7,593.2 794.6,565.0 795.6,583.3 796.4,556.9 797.3,572.6 798.2,558.9 798.9,544.0 799.8,485.3 800.6,403.3 801.5,400.3 802.0,402.7 802.7,471.1 803.5,529.3 804.1,553.3 804.6,557.6 805.3,576.3 806.1,591.3 806.8,573.9 807.4,564.5 808.1,582.1 808.5,588.9 809.2,564.9 810.1,575.7 810.6,573.1 811.5,612.3 812.2,588.8 813.1,577.1 814.0,587.4 815.0,577.4 815.9,579.0 816.8,564.4 817.7,588.0 818.7,599.7 819.6,586.1 820.1,572.2 820.9,613.4 821.9,574.1 822.9,589.6 823.5,628.5 824.4,598.7 825.1,581.7 825.9,590.7 826.4,567.8 827.2,577.9 828.0,607.6 828.6,633.8 829.0,595.0 829.6,589.2 830.4,590.7 830.9,587.4 831.9,578.2 832.5,587.7 833.3,592.9 834.1,567.0 834.5,621.3 835.3,563.1 835.8,589.1 836.3,593.1 837.2,574.0 837.8,580.6 838.8,607.3 839.7,608.5 840.4,606.3 841.2,566.8 841.6,572.0 842.5,584.3 843.3,599.2 843.9,586.7 844.5,584.3 845.5,580.4 846.5,574.2 847.5,568.9 848.2,560.5 848.8,583.3 849.6,593.4 850.5,569.2 851.4,558.6 852.2,576.7 853.0,594.5 853.8,566.4 854.5,598.5 855.0,586.5 855.5,567.7 856.4,567.3 857.1,567.7 858.1,574.6 858.8,595.0 859.7,557.3 860.2,564.6 861.0,580.1 861.7,592.5 862.2,648.6 862.7,598.9 863.1,563.7 864.0,564.5 864.5,574.5 865.0,580.4 865.6,581.0 866.2,582.6 866.7,575.8 867.4,568.6 868.4,565.6 868.9,589.6 869.5,602.6 870.1,591.8 870.7,574.5 871.2,565.3 871.8,541.2 872.5,591.0 873.5,595.7 874.1,589.1 874.7,580.2 875.6,585.6 876.5,565.7 877.2,581.1 878.0,594.7 878.7,571.1 879.6,587.0 880.4,585.0 881.3,593.5 881.7,575.8 882.5,575.8 883.1,593.0 883.7,592.1 884.7,563.5 885.2,608.0 886.0,588.0 886.6,584.6 887.3,582.2 887.8,595.2 888.4,605.9 888.9,601.2 889.9,593.9 890.4,583.1 891.2,573.7 891.8,570.7 892.5,528.0 893.4,531.7 893.9,531.8 894.5,528.6 895.4,526.3 896.3,524.3 896.9,527.4 897.4,520.5 898.3,519.7 899.1,537.6 900.0,537.4 900.6,535.3 901.2,557.5 902.0,585.1 902.5,577.1 903.5,597.1 904.5,581.7 905.0,605.2 905.7,595.9 906.7,600.4 907.7,549.3 908.6,597.9 909.2,573.6 909.7,593.5 910.7,577.1 911.2,586.5 911.8,589.5 912.7,595.6 913.6,592.6 914.3,614.6 914.8,580.1 915.6,580.2 916.1,601.1 916.6,577.8 917.3,585.5 918.3,576.9 918.8,592.3 919.6,584.6 920.5,593.9 921.3,575.3 921.9,580.0 922.7,583.3 923.7,626.4 924.6,620.7 925.3,584.3 926.3,580.1 927.1,640.3 928.1,584.6 928.6,556.6 929.3,628.3 930.1,577.3 930.9,553.1 931.9,596.3 932.7,589.8 933.7,583.7 934.6,619.5 935.0,601.0 935.5,585.7 936.4,561.8 937.2,569.6 938.2,645.0 939.0,565.8 939.7,576.2 940.6,606.8 941.4,559.1 941.9,574.5 942.8,580.0 943.3,560.3 943.9,567.7 944.5,561.4 945.0,577.3 945.7,577.2 946.7,561.2 947.4,561.1 947.9,610.3 948.6,586.6 949.0,619.6 950.0,593.9 950.9,609.6 951.4,602.5 952.2,582.6 952.8,578.0 953.3,569.3 954.0,586.9 954.7,589.4 955.4,598.5 956.1,559.8 956.7,562.8 957.4,602.3 958.0,589.1 959.0,575.7 959.4,590.6 959.9,595.4 960.8,574.4 961.6,586.0 962.2,592.3 962.8,616.7 963.7,577.5 964.7,587.2 965.3,563.8 966.2,575.1 966.9,592.4 967.3,609.8 967.9,591.7 968.8,598.3 969.7,595.6 970.5,577.1 971.0,594.7 972.0,588.8 972.8,594.2 973.4,605.3 974.1,563.1 974.9,587.3 975.5,587.2 976.5,586.0 977.1,564.5 978.1,587.2 979.0,582.3 979.5,618.4 980.4,579.9 981.1,582.2 981.6,617.9 982.2,578.4 982.7,566.5 983.5,577.3 984.3,575.1 984.9,623.6 985.9,596.9 986.9,605.6 987.8,550.0 988.7,582.7 989.2,583.7 990.1,591.1 990.8,586.8 991.7,570.7 992.2,523.1 993.1,517.2 993.5,502.8 994.3,409.4 995.1,411.9 995.8,503.2 996.7,545.7 997.2,567.8 997.9,546.8 998.5,574.0 999.0,612.2 999.5,573.8 1000.5,595.6 1000.9,566.3 1001.6,587.2 1002.5,584.7 1003.4,590.3 1004.2,587.6 1004.8,577.0 1005.4,566.1 1006.4,610.9 1006.9,556.6 1007.7,575.4 1008.3,611.8 1009.2,602.4 1009.9,584.3 1010.9,583.4 1011.3,574.7 1012.0,579.4 1012.8,564.9 1013.5,577.4 1014.0,579.2 1014.6,572.4 1015.2,572.8 1015.8,597.1 1016.5,579.6 1017.5,570.4 1018.3,570.7 1019.3,575.3 1020.0,566.4 1020.7,600.3 1021.5,595.6 1022.5,586.6 1023.3,566.7 1024.0,582.9 1024.6,543.3 1025.2,598.6 1025.8,576.0 1026.8,579.0 1027.2,591.6 1027.7,586.3 1028.1,592.8 1028.8,571.6 1029.3,570.1 1030.2,569.5 1030.7,580.4 1031.5,568.4 1032.1,577.0 1032.6,552.4 1033.2,600.7 1033.8,604.7 1034.2,595.9 1034.7,575.7 1035.5,558.8 1036.0,581.0 1036.5,581.7 1037.1,595.0 1037.6,569.5 1038.0,595.5 1039.0,563.4 1040.0,576.9 1040.6,578.4 1041.1,544.9 1041.7,577.5 1042.4,609.7 1043.0,586.1 1043.9,589.3 1044.7,553.3 1045.6,589.1 1046.4,583.6 1047.4,575.4 1048.0,576.3 1048.7,582.4 1049.3,579.6 1050.1,571.5 1050.6,579.5 1051.5,572.1 1052.5,576.8 1052.9,562.4 1053.4,570.3 1054.1,591.7 1054.9,585.8 1055.5,581.1 1056.2,598.7 1056.8,562.7 1057.8,590.3 1058.5,579.8 1059.1,576.0 1059.7,560.3 1060.3,585.9 1060.8,559.3 1061.4,564.2 1062.0,579.7 1062.5,568.6 1063.0,573.3 1063.8,589.3 1064.6,561.9 1065.2,602.0 1065.7,557.5 1066.4,571.6 1066.9,572.0 1067.4,591.4 1068.2,590.8 1068.8,562.6 1069.5,570.2 1070.1,590.0 1070.7,571.3 1071.4,581.1 1072.2,594.2 1072.7,557.3 1073.6,596.3 1074.2,583.2 1075.1,563.5 1076.1,563.3 1076.9,574.3 1077.6,581.7 1078.1,581.6 1078.7,589.4 1079.7,571.6 1080.4,608.0 1081.2,580.9 1081.7,573.8 1082.3,554.5 1082.9,571.5 1083.7,574.4 1084.4,591.3 1085.0,602.0 1085.6,580.5 1086.5,580.8 1087.5,539.8 1088.0,538.9 1088.6,540.9 1089.2,542.2 1089.9,562.1 1090.9,525.3 1091.4,526.1 1092.3,557.0 1093.0,566.2 1093.9,585.4 1094.9,577.0 1095.5,566.3 1095.9,559.2 1096.4,589.9 1097.3,588.4 1098.0,565.2 1098.8,543.2 1099.7,572.4 1100.6,598.5 1101.2,561.6 1102.0,587.9 1102.5,605.9 1103.5,572.2 1104.1,600.0 1104.6,578.1 1105.4,577.2 1105.9,602.3 1106.6,582.4 1107.2,579.2 1108.1,589.8 1108.7,566.5 1109.6,586.8 1110.1,577.8 1110.9,559.2 1111.4,569.2 1111.9,557.5 1112.6,624.9 1113.2,595.1 1114.2,606.9 1115.2,599.1 1115.9,587.4 1116.7,578.8 1117.4,581.5 1118.0,593.4 1118.8,599.0 1119.4,569.6 1119.9,581.8 1120.8,612.3 1121.3,587.8 1121.9,573.7 1122.4,581.0 1123.1,573.7 1123.8,588.6 1124.5,581.5 1125.4,556.5 1126.4,578.4 1127.0,578.6 1127.9,581.6 1128.4,578.5 1129.0,582.0 1129.9,576.1 1130.7,576.0 1131.6,595.2 1132.1,579.1 1132.7,579.1 1133.3,555.4 1134.1,578.1 1134.9,592.0 1135.5,578.3 1136.2,595.1 1137.1,575.4 1137.8,591.5 1138.7,590.4 1139.2,558.9 1139.9,593.0 1140.5,589.9 1141.4,560.6 1142.0,588.2 1142.8,582.9 1143.3,573.5 1143.9,599.7 1144.8,605.7 1145.6,585.6 1146.4,579.9 1147.2,592.9 1147.6,590.7 1148.6,584.0 1149.6,630.8 1150.5,565.6 1151.2,584.9 1152.0,596.9 1152.6,578.0 1153.2,593.3 1153.8,564.4 1154.4,582.5 1155.0,614.4 1155.9,595.5 1156.5,590.6 1157.2,581.9 1158.1,587.1 1158.6,632.6 1159.1,588.9 1159.6,566.0 1160.4,566.3 1161.3,593.2 1162.0,577.0 1162.6,556.0 1163.1,614.1 1163.5,582.9 1164.3,582.3 1165.0,581.5 1165.8,596.1 1166.4,568.6 1167.3,578.8 1167.8,576.7 1168.5,594.6 1169.1,581.0 1169.9,591.3 1170.3,558.6 1170.8,590.5 1171.6,588.6 1172.6,600.6 1173.4,629.2 1174.2,574.2 1175.1,588.0 1175.9,600.0 1176.4,581.4 1177.1,601.2 1177.7,596.7 1178.4,597.1 1179.4,597.2 1180.2,579.3 1181.0,599.5 1181.7,580.4 1182.5,565.4 1183.4,591.2 1184.1,575.4 1184.5,569.1 1185.1,568.4 1186.0,540.5 1187.0,421.6 1187.5,419.0 1188.4,422.1 1189.0,523.3 1189.4,510.0 1190.2,545.0 1190.7,568.1 1191.5,597.5 1192.1,593.8 1192.6,599.9 1193.1,595.4 1193.9,588.9 1194.5,592.9 1195.1,614.0 1195.6,580.6 1196.6,604.7 1197.6,586.1 1198.5,589.6 1199.2,584.7 1199.7,585.8 1200.6,573.4 1201.5,598.4 1202.4,602.4 1203.1,592.3 1203.9,578.9 1204.5,580.7 1205.4,563.3 1205.9,571.2 1206.7,574.6 1207.6,569.8 1208.2,559.9 1208.9,563.4 1209.5,573.3 1210.1,566.3 1211.1,572.1 1212.0,559.2 1212.8,582.5 1213.7,533.4 1214.2,566.9 1214.7,570.2 1215.4,574.7 1216.0,613.3 1216.8,579.6 1217.8,604.1 1218.7,592.1 1219.2,595.5 1220.1,601.0 1220.9,564.3 1221.7,585.4 1222.6,598.4 1223.1,641.5 1223.8,611.4 1224.7,584.8 1225.4,594.4 1225.9,574.8 1226.8,597.2 1227.4,574.1 1228.1,583.0 1228.6,612.7 1229.5,584.3 1230.1,576.1 1230.8,569.8 1231.6,591.7 1232.6,583.4 1233.1,564.8 1234.0,598.1 1234.8,584.0 1235.8,570.7 1236.7,559.7 1237.5,585.3 1238.0,583.1 1238.9,591.0 1239.5,565.2 1240.3,573.2 1240.9,583.1 1241.4,579.3 1241.9,589.0 1242.4,579.7 1243.4,598.4 1244.4,588.6 1245.3,552.8 1246.1,560.9 1246.6,583.4 1247.2,588.0 1247.6,612.1 1248.4,602.6 1249.2,530.5 1249.9,589.7 1250.5,544.0 1251.3,549.4 1252.3,571.0 1252.7,569.1 1253.6,562.1 1254.2,576.9 1254.9,585.4 1255.4,590.6 1256.0,564.3 1256.6,561.5 1257.6,586.5 1258.0,611.7 1258.7,578.3 1259.5,559.6 1260.3,603.4 1260.7,600.5 1261.3,581.6 1262.2,597.9 1262.8,582.6 1263.4,586.0 1264.2,588.8 1265.1,563.9 1266.0,585.2 1266.9,588.0 1267.3,594.7 1268.2,570.2 1268.9,592.8 1269.7,589.8 1270.2,591.2 1270.9,599.3 1271.5,576.8 1272.4,581.3 1273.2,575.7 1274.0,586.3 1274.7,632.3 1275.2,599.9 1275.9,583.7 1276.4,579.1 1277.0,580.9 1277.9,589.8 1278.8,564.5 1279.5,590.7 1280.4,557.5 1281.1,551.4 1281.6,551.4" fill="none" stroke="#62e840" stroke-width="1.1"/>
<text x="313.5" y="288.1" text-anchor="end" font-family="Liberation Sans" font-size="12" fill="#7fe46a">38.6 dBm</text>
<text x="313.5" y="333.1" text-anchor="end" font-family="Liberation Sans" font-size="12" fill="#7fe46a">18.6 dBm</text>
<text x="313.5" y="386.1" text-anchor="end" font-family="Liberation Sans" font-size="12" fill="#7fe46a">-1.4 dBm</text>
<text x="313.5" y="438.9" text-anchor="end" font-family="Liberation Sans" font-size="12" fill="#7fe46a">-21.4 dBm</text>
<text x="313.5" y="491.8" text-anchor="end" font-family="Liberation Sans" font-size="12" fill="#7fe46a">-41.4 dBm</text>
<text x="313.5" y="544.4" text-anchor="end" font-family="Liberation Sans" font-size="12" fill="#7fe46a">-61.4 dBm</text>
<text x="313.5" y="597.1" text-anchor="end" font-family="Liberation Sans" font-size="12" fill="#7fe46a">-81.4 dBm</text>
<text x="313.5" y="649.9" text-anchor="end" font-family="Liberation Sans" font-size="12" fill="#7fe46a">-101.4 dBm</text>
<text x="313.5" y="696.1" text-anchor="end" font-family="Liberation Sans" font-size="12" fill="#7fe46a">-121.4 dBm</text>
<text x="318.5" y="711.6" font-family="Liberation Sans" font-size="12" fill="#7fe46a">0 MHz</text>
<text x="415.1" y="711.6" text-anchor="middle" font-family="Liberation Sans" font-size="12" fill="#7fe46a">1 MHz</text>
<text x="511.6" y="711.6" text-anchor="middle" font-family="Liberation Sans" font-size="12" fill="#7fe46a">2 MHz</text>
<text x="608.2" y="711.6" text-anchor="middle" font-family="Liberation Sans" font-size="12" fill="#7fe46a">3 MHz</text>
<text x="704.8" y="711.6" text-anchor="middle" font-family="Liberation Sans" font-size="12" fill="#7fe46a">4 MHz</text>
<text x="801.3" y="711.6" text-anchor="middle" font-family="Liberation Sans" font-size="12" fill="#7fe46a">5 MHz</text>
<text x="897.9" y="711.6" text-anchor="middle" font-family="Liberation Sans" font-size="12" fill="#7fe46a">6 MHz</text>
<text x="994.5" y="711.6" text-anchor="middle" font-family="Liberation Sans" font-size="12" fill="#7fe46a">7 MHz</text>
<text x="1091.1" y="711.6" text-anchor="middle" font-family="Liberation Sans" font-size="12" fill="#7fe46a">8 MHz</text>
<text x="1187.6" y="711.6" text-anchor="middle" font-family="Liberation Sans" font-size="12" fill="#7fe46a">9 MHz</text>
<text x="1284" y="711.6" text-anchor="end" font-family="Liberation Sans" font-size="12" fill="#7fe46a">10 MHz</text>
<path d="M318.5 699L315 706H322Z" fill="#44dd33"/>
<path d="M284 364.5H318.5V375H284Q281 375 281 372V367.5Q281 364.5 284 364.5Z" fill="#3ee62a"/>
<text x="300" y="373.3" text-anchor="middle" font-family="Liberation Sans" font-size="9.5" fill="#0b3a08">SpecAn</text>
<path d="M307 376.5H318" stroke="#9a9a9a" stroke-width="1"/>
<path d="M407.1 350.0H421.5L414.3 360.3Z" fill="none" stroke="#b4b4f2" stroke-width="1"/>
<path d="M600.3 379.0H614.7L607.5 389.3Z" fill="none" stroke="#b4b4f2" stroke-width="1"/>
<path d="M793.3 389.0H807.7L800.5 399.3Z" fill="none" stroke="#b4b4f2" stroke-width="1"/>
<path d="M985.8 398.0H1000.2L993.0 408.3Z" fill="none" stroke="#b4b4f2" stroke-width="1"/>
<path d="M1179.3 407.0H1193.7L1186.5 417.3Z" fill="none" stroke="#b4b4f2" stroke-width="1"/>
<path d="M314.3 493.5H328.7L321.5 503.8Z" fill="none" stroke="#b4b4f2" stroke-width="1"/>
<path d="M504.3 502.5H518.7L511.5 512.8Z" fill="none" stroke="#b4b4f2" stroke-width="1"/>
<path d="M697.3 505.5H711.7L704.5 515.8Z" fill="none" stroke="#b4b4f2" stroke-width="1"/>
<path d="M696.8 530.5H711.2L704.0 540.8Z" fill="none" stroke="#b4b4f2" stroke-width="1"/>
<path d="M889.3 507.5H903.7L896.5 517.8Z" fill="none" stroke="#b4b4f2" stroke-width="1"/>
<path d="M893.3 520.0H907.7L900.5 530.3Z" fill="none" stroke="#b4b4f2" stroke-width="1"/>
<path d="M887.8 527.0H902.2L895.0 537.3Z" fill="none" stroke="#b4b4f2" stroke-width="1"/>
<path d="M1083.8 516.5H1098.2L1091.0 526.8Z" fill="none" stroke="#b4b4f2" stroke-width="1"/>
<path d="M1080.8 533.0H1095.2L1088.0 543.3Z" fill="none" stroke="#b4b4f2" stroke-width="1"/>
<text x="420.5" y="340.6" text-anchor="middle" font-family="Liberation Sans" font-size="13" fill="#f0f0f0">Ref</text>
<text x="606" y="370.1" text-anchor="middle" font-family="Liberation Sans" font-size="13" fill="#f0f0f0">2</text>
<text x="798.5" y="379.6" text-anchor="middle" font-family="Liberation Sans" font-size="13" fill="#f0f0f0">3</text>
<text x="991.5" y="388.6" text-anchor="middle" font-family="Liberation Sans" font-size="13" fill="#f0f0f0">4</text>
<text x="1185" y="399.1" text-anchor="middle" font-family="Liberation Sans" font-size="13" fill="#f0f0f0">5</text>
<text x="322" y="485.6" text-anchor="middle" font-family="Liberation Sans" font-size="13" fill="#f0f0f0">6</text>
<text x="510" y="494.1" text-anchor="middle" font-family="Liberation Sans" font-size="13" fill="#f0f0f0">7</text>
<text x="701.5" y="497.6" text-anchor="middle" font-family="Liberation Sans" font-size="13" fill="#f0f0f0">9</text>
<text x="705.5" y="521.6" text-anchor="middle" font-family="Liberation Sans" font-size="13" fill="#f0f0f0">14</text>
<text x="895" y="499.1" text-anchor="middle" font-family="Liberation Sans" font-size="13" fill="#f0f0f0">8</text>
<text x="903" y="511.1" text-anchor="middle" font-family="Liberation Sans" font-size="13" fill="#f0f0f0">11</text>
<text x="897" y="519.4" text-anchor="middle" font-family="Liberation Sans" font-size="13" fill="#f0f0f0">12</text>
<text x="1092.5" y="506.1" text-anchor="middle" font-family="Liberation Sans" font-size="13" fill="#f0f0f0">10</text>
<text x="1089.5" y="523.1" text-anchor="middle" font-family="Liberation Sans" font-size="13" fill="#f0f0f0">13</text>
</svg>
</div>
</body></html>
